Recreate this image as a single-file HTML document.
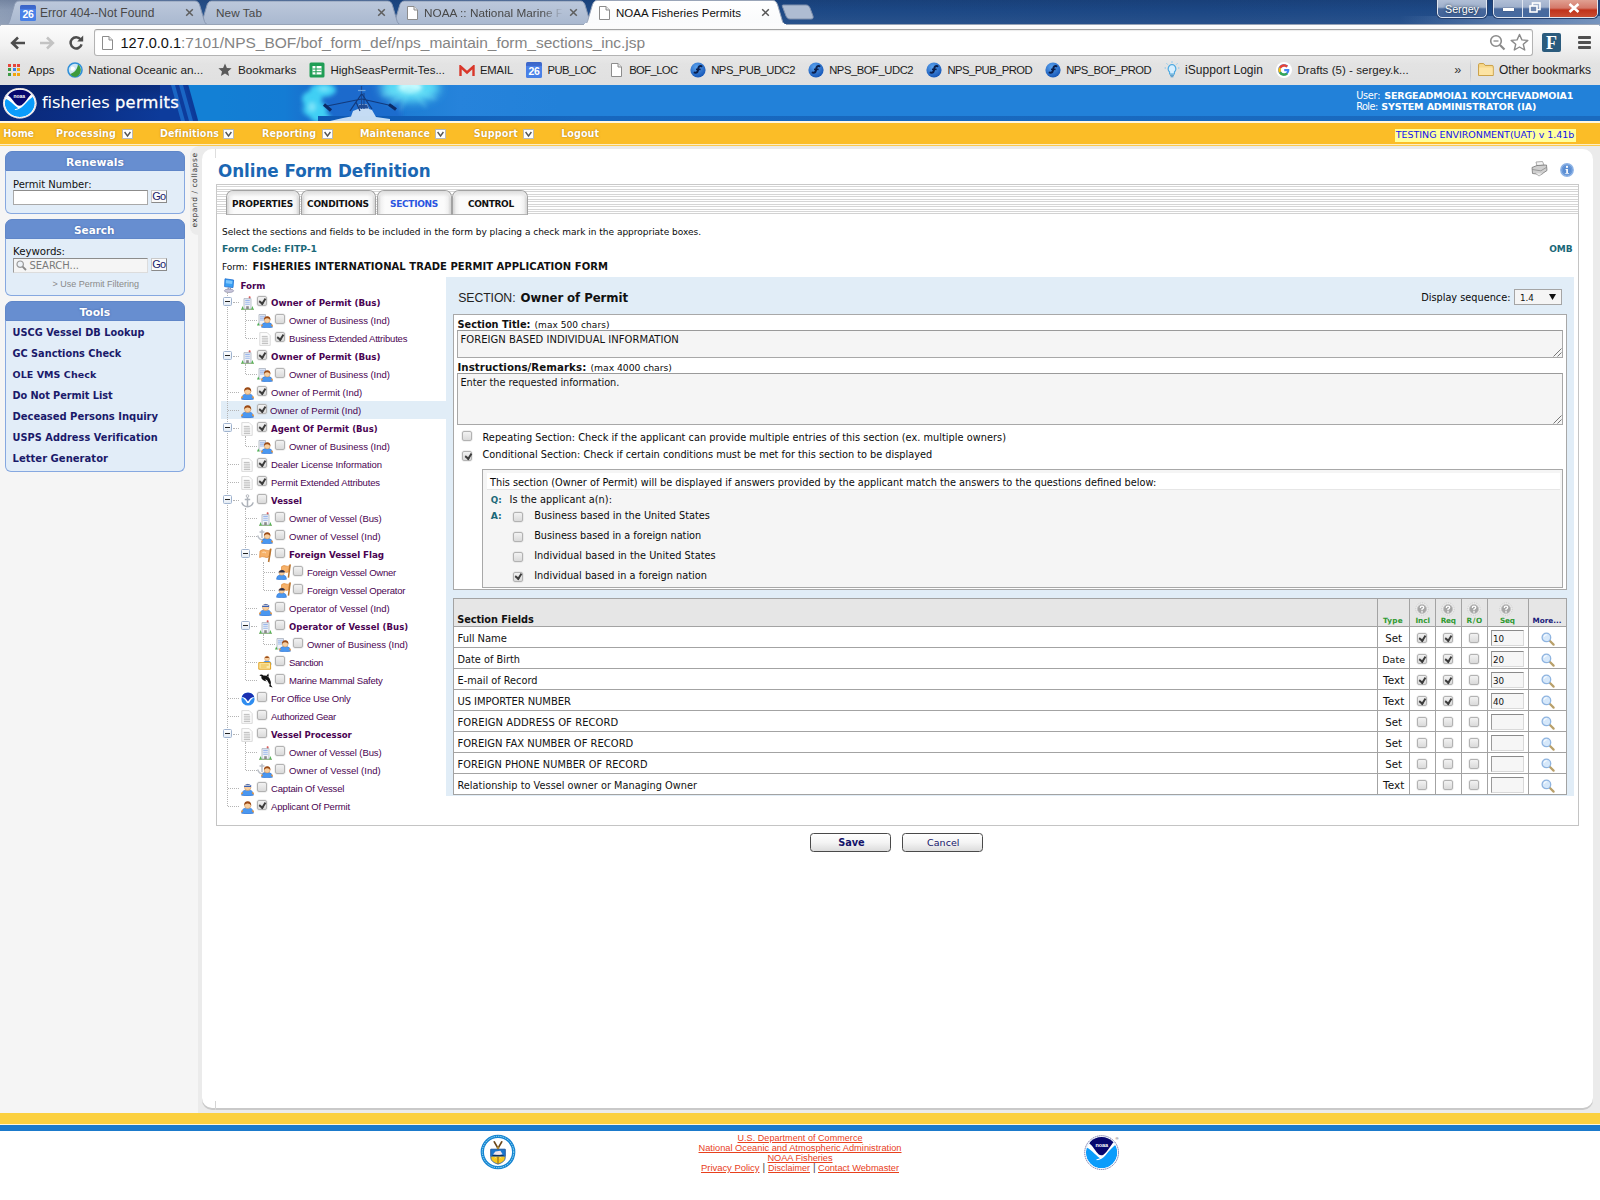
<!DOCTYPE html>
<html lang="en"><head><meta charset="utf-8"><title>NOAA Fisheries Permits</title>
<style>
html,body{margin:0;padding:0;}
body{width:1600px;height:1200px;position:relative;overflow:hidden;background:#fff;font-family:"DejaVu Sans",sans-serif;}
#pg div,#pg span.t,#pg svg,#pg i{position:absolute;box-sizing:border-box;}
#pg .t{white-space:nowrap;height:20px;}
#pg .t span{position:static;}
#pg b{font-weight:bold;}
i.cb{width:10px;height:10px;border:1px solid #b2b2b2;border-radius:2px;background:linear-gradient(#f2f2f2,#dadada);display:block;box-shadow:0 0 0 .5px rgba(200,200,200,.5)}
i.cb.on::after{content:"";position:absolute;left:2.3px;top:-.3px;width:4.6px;height:7px;border:solid #3c3c3c;border-width:0 2px 2px 0;transform:rotate(40deg) skewX(8deg);box-sizing:border-box;}
</style></head><body><div id="pg" style="left:0;top:0;width:1600px;height:1200px;overflow:hidden">
<div style="left:0px;top:0px;width:1600px;height:26px;background:linear-gradient(90deg,#8c9cb5 0,#8898b3 16px,#6a84ab 50px,#2f578f 140px,#1d4a87 300px,#1c4784 1200px,#1f4b88 1600px);"></div>
<div style="left:0px;top:0px;width:1600px;height:26px;background:linear-gradient(180deg,rgba(10,30,70,.18) 0,rgba(0,0,0,0) 40%,rgba(255,255,255,.06) 100%);"></div>
<div style="left:1400px;top:16px;width:200px;height:10px;background:linear-gradient(90deg,rgba(140,165,205,0),rgba(140,165,205,.45) 50%,rgba(150,175,210,.7));"></div>
<svg width="1600" height="27" style="left:0;top:-1px" viewBox="0 0 1600 27"><defs><linearGradient id="tgi" x1="0" y1="0" x2="0" y2="1"><stop offset="0" stop-color="#bcc8db"/><stop offset="1" stop-color="#a9b8cf"/></linearGradient><linearGradient id="tga" x1="0" y1="0" x2="0" y2="1"><stop offset="0" stop-color="#ffffff"/><stop offset="1" stop-color="#f9fafb"/></linearGradient></defs><path d="M389.9 26 C392.9 26 393.9 24.5 394.9 22.5 L399.9 5.5 C400.9 3.5 401.9 2 404.4 2 L580.4 2 C582.9 2 583.9 3.5 584.9 5.5 L589.9 22.5 C590.9 24.5 591.9 26 594.9 26 Z" fill="url(#tgi)" stroke="#8a99b3" stroke-width="1"/><path d="M197.2 26 C200.2 26 201.2 24.5 202.2 22.5 L207.2 5.5 C208.2 3.5 209.2 2 211.7 2 L387.7 2 C390.2 2 391.2 3.5 392.2 5.5 L397.2 22.5 C398.2 24.5 399.2 26 402.2 26 Z" fill="url(#tgi)" stroke="#8a99b3" stroke-width="1"/><path d="M4.5 26 C7.5 26 8.5 24.5 9.5 22.5 L14.5 5.5 C15.5 3.5 16.5 2 19 2 L195 2 C197.5 2 198.5 3.5 199.5 5.5 L204.5 22.5 C205.5 24.5 206.5 26 209.5 26 Z" fill="url(#tgi)" stroke="#8a99b3" stroke-width="1"/><path d="M783 6 L806 6 C808 6 809 7 810 9 L813 17 C813.5 19 813 20 811 20 L790 20 C788 20 787 19 786 17 L783 9 C782 7 782 6 783 6Z" fill="#aebcd2" stroke="#7f90ad" stroke-width="1"/><path d="M582.5 26 C585.5 26 586.5 24.5 587.5 22.5 L592.5 5.5 C593.5 3.5 594.5 1.5 597 1.5 L773 1.5 C775.5 1.5 776.5 3.5 777.5 5.5 L782.5 22.5 C783.5 24.5 784.5 26 787.5 26 Z" fill="url(#tga)" stroke="#9aa5b8" stroke-width="1"/></svg>
<div style="left:0px;top:24px;width:1600px;height:61px;background:linear-gradient(180deg,#fdfdfd 0,#f3f3f3 20px,#e9e9e9 32px,#e3e3e3 40px,#e0e0e0 60px);border-radius:4px 4px 0 0;"></div>
<div style="left:585px;top:23px;width:199px;height:3px;background:#fbfbfc;"></div>
<div style="left:0px;top:24px;width:584px;height:1px;background:#97a3b6;"></div>
<div style="left:786px;top:24px;width:814px;height:1px;background:#97a3b6;"></div>
<div style="left:20px;top:5px;width:16px;height:16px;background:linear-gradient(180deg,#3b64c6 0,#3f6bd0 4px,#4a80e8 4.5px,#4880e6 100%);border-radius:1.5px;"></div><div class="t" style="left:20px;top:8.2px;width:16px;text-align:center;font:bold 10.5px/12px 'Liberation Sans',sans-serif;color:#fff;letter-spacing:-0.3px;height:12px"><span>26</span></div>
<span class="t" style="top:2.5px;font:normal 12.0px/20px 'Liberation Sans',sans-serif;color:#484848;left:40px;letter-spacing:0.023px;">Error 404--Not Found</span>
<svg width="9" height="9" style="left:184.5px;top:8.0px" viewBox="0 0 9 9"><path d="M1.2 1.2 L7.8 7.8 M7.8 1.2 L1.2 7.8" stroke="#5e5e5e" stroke-width="1.5" stroke-linecap="butt"/></svg>
<span class="t" style="top:2.5px;font:normal 11.75px/20px 'Liberation Sans',sans-serif;color:#484848;left:216px;letter-spacing:0.069px;">New Tab</span>
<svg width="9" height="9" style="left:376.5px;top:8.0px" viewBox="0 0 9 9"><path d="M1.2 1.2 L7.8 7.8 M7.8 1.2 L1.2 7.8" stroke="#5e5e5e" stroke-width="1.5" stroke-linecap="butt"/></svg>
<svg width="11" height="14" style="left:407px;top:6px" viewBox="0 0 11 14"><path d="M0.5 0.5 H7 L10.5 4 V13.5 H0.5Z" fill="#fff" stroke="#8c8c8c"/><path d="M7 0.5 V4 H10.5" fill="#e8e8e8" stroke="#8c8c8c"/></svg>
<span class="t" style="top:2.5px;font:normal 11.75px/20px 'Liberation Sans',sans-serif;color:#484848;left:424px;letter-spacing:0.022px;-webkit-mask-image:linear-gradient(90deg,#000 85%,transparent 100%);">NOAA :: National Marine F</span>
<svg width="9" height="9" style="left:568.5px;top:8.0px" viewBox="0 0 9 9"><path d="M1.2 1.2 L7.8 7.8 M7.8 1.2 L1.2 7.8" stroke="#5e5e5e" stroke-width="1.5" stroke-linecap="butt"/></svg>
<svg width="11" height="14" style="left:599px;top:6px" viewBox="0 0 11 14"><path d="M0.5 0.5 H7 L10.5 4 V13.5 H0.5Z" fill="#fff" stroke="#8c8c8c"/><path d="M7 0.5 V4 H10.5" fill="#e8e8e8" stroke="#8c8c8c"/></svg>
<span class="t" style="top:2.5px;font:normal 11.5px/20px 'Liberation Sans',sans-serif;color:#111;left:616px;letter-spacing:0.046px;">NOAA Fisheries Permits</span>
<svg width="9" height="9" style="left:760.5px;top:8.0px" viewBox="0 0 9 9"><path d="M1.2 1.2 L7.8 7.8 M7.8 1.2 L1.2 7.8" stroke="#555" stroke-width="1.5" stroke-linecap="butt"/></svg>
<div style="left:1437px;top:-2px;width:50px;height:20px;border:1px solid #dfe6f1;border-radius:0 0 5px 5px;background:linear-gradient(180deg,#b3c1d8 0,#9fb0cc 45%,#4a6a9d 55%,#3f6197 100%);box-shadow:0 0 0 1px #26406d;"></div>
<div class="t" style="top:-1px;font:normal 10.75px/20px 'Liberation Sans',sans-serif;color:#fff;left:1162px;width:600px;text-align:center;letter-spacing:-0.010px;text-shadow:0 0 3px #123;"><span>Sergey</span></div>
<div style="left:1493px;top:-2px;width:105px;height:20px;border:1px solid #dfe6f1;border-radius:0 0 5px 5px;background:linear-gradient(180deg,#b3c1d8 0,#9fb0cc 45%,#4a6a9d 55%,#456aa0 100%);box-shadow:0 0 0 1px #26406d;overflow:hidden;"><div style="left:28px;top:0;width:1px;height:20px;background:#dfe6f1"></div><div style="left:55px;top:0;width:1px;height:20px;background:#dfe6f1"></div><div style="left:56px;top:0;width:48px;height:20px;background:linear-gradient(180deg,#e2a597 0,#d4796a 45%,#c0321b 55%,#cc553a 100%)"></div></div>
<div style="left:1503px;top:8px;width:11px;height:3px;background:#fff;box-shadow:0 0 1px #223;"></div>
<svg width="12" height="11" style="left:1529px;top:2px" viewBox="0 0 12 11"><rect x="3.5" y="1" width="7.5" height="6.5" fill="none" stroke="#fff" stroke-width="1.6"/><rect x="1" y="4" width="7" height="6" fill="#7088b0" stroke="#fff" stroke-width="1.6"/></svg>
<svg width="12" height="10" style="left:1568px;top:3px" viewBox="0 0 12 10"><path d="M1.5 1 L10.5 9 M10.5 1 L1.5 9" stroke="#fff" stroke-width="2.6"/></svg>
<svg width="16" height="14" style="left:10px;top:35.5px" viewBox="0 0 16 14"><path d="M15 7 H3.5 M8 1.5 L2.2 7 L8 12.5" fill="none" stroke="#4d4d4d" stroke-width="2.6" stroke-linejoin="miter"/></svg>
<svg width="16" height="14" style="left:38.5px;top:35.5px" viewBox="0 0 16 14"><path d="M1 7 H12.5 M8 1.5 L13.8 7 L8 12.5" fill="none" stroke="#c3c3c3" stroke-width="2.6"/></svg>
<svg width="16" height="15" style="left:67.5px;top:34.5px" viewBox="0 0 16 15"><path d="M12.6 4.3 A5.6 5.6 0 1 0 13.6 9.4" fill="none" stroke="#4d4d4d" stroke-width="2.5"/><path d="M9.2 6.6 H15.2 V0.6 Z" fill="#4d4d4d"/></svg>
<div style="left:94px;top:29px;width:1439px;height:27px;background:#fff;border:1px solid #b3b3b3;border-top-color:#a2a2a2;border-radius:3px;box-shadow:inset 0 1px 1px rgba(0,0,0,.08);"></div>
<svg width="11" height="14" style="left:102px;top:35.5px" viewBox="0 0 11 14"><path d="M0.5 0.5 H7 L10.5 4 V13.5 H0.5Z" fill="#fff" stroke="#8c8c8c"/><path d="M7 0.5 V4 H10.5" fill="#e8e8e8" stroke="#8c8c8c"/></svg>
<span class="t" style="top:32.8px;font:normal 14.5px/20px 'Liberation Sans',sans-serif;color:#111;left:120.5px;">127.0.0.1</span>
<span class="t" style="top:32.8px;font:normal 15.5px/20px 'Liberation Sans',sans-serif;color:#848484;left:181px;letter-spacing:-0.020px;">:7101/NPS_BOF/bof_form_def/nps_maintain_form_sections_inc.jsp</span>
<svg width="17" height="17" style="left:1489px;top:34px" viewBox="0 0 17 17"><circle cx="7" cy="7" r="5.3" fill="none" stroke="#8a8a8a" stroke-width="1.6"/><path d="M4.5 7 H9.5" stroke="#8a8a8a" stroke-width="1.3"/><path d="M11 11 L15.5 15.5" stroke="#8a8a8a" stroke-width="2.2"/></svg>
<svg width="19" height="18" style="left:1510px;top:33px" viewBox="0 0 19 18"><path d="M9.5 1.5 L11.9 6.9 L17.8 7.4 L13.3 11.3 L14.7 17 L9.5 14 L4.3 17 L5.7 11.3 L1.2 7.4 L7.1 6.9 Z" fill="#fff" stroke="#8a8a8a" stroke-width="1.4" stroke-linejoin="round"/></svg>
<div style="left:1542px;top:33px;width:19px;height:19px;background:#2b5b7d;border-radius:2px;"></div>
<div class="t" style="top:32.5px;font:bold 18px/20px 'Liberation Sans',sans-serif;color:#fff;left:1251.5px;width:600px;text-align:center;font-family:'Liberation Serif',serif;"><span>F</span></div>
<div style="left:1578px;top:36px;width:13px;height:3px;background:#505050;border-radius:1px;"></div>
<div style="left:1578px;top:41px;width:13px;height:3px;background:#505050;border-radius:1px;"></div>
<div style="left:1578px;top:46px;width:13px;height:3px;background:#505050;border-radius:1px;"></div>
<div style="left:8.0px;top:63.5px;width:3px;height:3px;background:#e5453b;"></div>
<div style="left:12.6px;top:63.5px;width:3px;height:3px;background:#e5453b;"></div>
<div style="left:17.2px;top:63.5px;width:3px;height:3px;background:#e5453b;"></div>
<div style="left:8.0px;top:68.1px;width:3px;height:3px;background:#3f9b45;"></div>
<div style="left:12.6px;top:68.1px;width:3px;height:3px;background:#3a80e6;"></div>
<div style="left:17.2px;top:68.1px;width:3px;height:3px;background:#f2a60d;"></div>
<div style="left:8.0px;top:72.7px;width:3px;height:3px;background:#3f9b45;"></div>
<div style="left:12.6px;top:72.7px;width:3px;height:3px;background:#f2a60d;"></div>
<div style="left:17.2px;top:72.7px;width:3px;height:3px;background:#f2a60d;"></div>
<span class="t" style="top:59.8px;font:normal 11.5px/20px 'Liberation Sans',sans-serif;color:#1c1c1c;left:28.2px;letter-spacing:0.070px;">Apps</span>
<svg width="16" height="16" style="left:67px;top:62px" viewBox="0 0 16 16"><circle cx="8" cy="8" r="7" fill="#cfe6f5" stroke="#2f8fd8" stroke-width="1.6"/><path d="M3 12 C7 11 10 8 11 2.5 A7 7 0 0 1 8 15 A7 7 0 0 1 3 12Z" fill="#3c9a3c"/><path d="M4 5 C6 4 8 5 8 7 C7 9 5 9 3.5 8Z" fill="#fff"/></svg>
<span class="t" style="top:59.8px;font:normal 11.75px/20px 'Liberation Sans',sans-serif;color:#1c1c1c;left:88.2px;letter-spacing:-0.028px;">National Oceanic an...</span>
<svg width="14" height="14" style="left:218px;top:63px" viewBox="0 0 14 14"><path d="M7 0.5 L8.9 4.9 L13.6 5.3 L10 8.4 L11.1 13.1 L7 10.6 L2.9 13.1 L4 8.4 L0.4 5.3 L5.1 4.9 Z" fill="#5a5a5a"/></svg>
<span class="t" style="top:59.8px;font:normal 11.75px/20px 'Liberation Sans',sans-serif;color:#1c1c1c;left:238px;letter-spacing:-0.053px;">Bookmarks</span>
<svg width="16" height="16" style="left:309px;top:62px" viewBox="0 0 16 16"><rect x="0.5" y="0.5" width="15" height="15" rx="1.5" fill="#1f9d55"/><rect x="3.5" y="4" width="9" height="8.5" fill="#fff"/><path d="M3.5 7 H12.5 M3.5 9.8 H12.5 M7 4 V12.5" stroke="#1f9d55" stroke-width="1.1"/></svg>
<span class="t" style="top:59.8px;font:normal 11.5px/20px 'Liberation Sans',sans-serif;color:#1c1c1c;left:330.5px;letter-spacing:0.004px;">HighSeasPermit-Tes...</span>
<svg width="16" height="12" style="left:459px;top:64.5px" viewBox="0 0 16 12"><path d="M1.5 11 V1.5 L8 7.5 L14.5 1.5 V11" fill="none" stroke="#d9372a" stroke-width="2.4" stroke-linejoin="miter"/></svg>
<span class="t" style="top:59.8px;font:normal 11.25px/20px 'Liberation Sans',sans-serif;color:#1c1c1c;left:480px;letter-spacing:-0.153px;">EMAIL</span>
<div style="left:526px;top:62px;width:16px;height:16px;background:linear-gradient(180deg,#3b64c6 0,#3f6bd0 4px,#4a80e8 4.5px,#4880e6 100%);border-radius:1.5px;"></div><div class="t" style="left:526px;top:65.2px;width:16px;text-align:center;font:bold 10.5px/12px 'Liberation Sans',sans-serif;color:#fff;letter-spacing:-0.3px;height:12px"><span>26</span></div>
<span class="t" style="top:59.8px;font:normal 11.25px/20px 'Liberation Sans',sans-serif;color:#1c1c1c;left:547.5px;letter-spacing:-0.604px;">PUB_LOC</span>
<svg width="11" height="14" style="left:610.5px;top:62.5px" viewBox="0 0 11 14"><path d="M0.5 0.5 H7 L10.5 4 V13.5 H0.5Z" fill="#fff" stroke="#8c8c8c"/><path d="M7 0.5 V4 H10.5" fill="#e8e8e8" stroke="#8c8c8c"/></svg>
<span class="t" style="top:59.8px;font:normal 11.25px/20px 'Liberation Sans',sans-serif;color:#1c1c1c;left:629.2px;letter-spacing:-0.602px;">BOF_LOC</span>
<svg width="16" height="16" style="left:690px;top:62px" viewBox="0 0 16 16"><defs><radialGradient id="ng690" cx=".4" cy=".3" r=".8"><stop offset="0" stop-color="#5aa2ee"/><stop offset="1" stop-color="#0d4db0"/></radialGradient></defs><circle cx="8" cy="8" r="7.6" fill="url(#ng690)"/><path d="M11.5 4.2 C9.5 3.6 8.4 4.6 8.2 7 C8 9.6 7.2 11.2 4.6 10.6" fill="none" stroke="#0a1f4d" stroke-width="2" stroke-linecap="round"/><path d="M6 7.4 H10.6" stroke="#0a1f4d" stroke-width="1.6"/></svg>
<span class="t" style="top:59.8px;font:normal 11.25px/20px 'Liberation Sans',sans-serif;color:#1c1c1c;left:711.2px;letter-spacing:-0.468px;">NPS_PUB_UDC2</span>
<svg width="16" height="16" style="left:808px;top:62px" viewBox="0 0 16 16"><defs><radialGradient id="ng808" cx=".4" cy=".3" r=".8"><stop offset="0" stop-color="#5aa2ee"/><stop offset="1" stop-color="#0d4db0"/></radialGradient></defs><circle cx="8" cy="8" r="7.6" fill="url(#ng808)"/><path d="M11.5 4.2 C9.5 3.6 8.4 4.6 8.2 7 C8 9.6 7.2 11.2 4.6 10.6" fill="none" stroke="#0a1f4d" stroke-width="2" stroke-linecap="round"/><path d="M6 7.4 H10.6" stroke="#0a1f4d" stroke-width="1.6"/></svg>
<span class="t" style="top:59.8px;font:normal 11.25px/20px 'Liberation Sans',sans-serif;color:#1c1c1c;left:829.2px;letter-spacing:-0.451px;">NPS_BOF_UDC2</span>
<svg width="16" height="16" style="left:926px;top:62px" viewBox="0 0 16 16"><defs><radialGradient id="ng926" cx=".4" cy=".3" r=".8"><stop offset="0" stop-color="#5aa2ee"/><stop offset="1" stop-color="#0d4db0"/></radialGradient></defs><circle cx="8" cy="8" r="7.6" fill="url(#ng926)"/><path d="M11.5 4.2 C9.5 3.6 8.4 4.6 8.2 7 C8 9.6 7.2 11.2 4.6 10.6" fill="none" stroke="#0a1f4d" stroke-width="2" stroke-linecap="round"/><path d="M6 7.4 H10.6" stroke="#0a1f4d" stroke-width="1.6"/></svg>
<span class="t" style="top:59.8px;font:normal 11.25px/20px 'Liberation Sans',sans-serif;color:#1c1c1c;left:947.5px;letter-spacing:-0.565px;">NPS_PUB_PROD</span>
<svg width="16" height="16" style="left:1045px;top:62px" viewBox="0 0 16 16"><defs><radialGradient id="ng1045" cx=".4" cy=".3" r=".8"><stop offset="0" stop-color="#5aa2ee"/><stop offset="1" stop-color="#0d4db0"/></radialGradient></defs><circle cx="8" cy="8" r="7.6" fill="url(#ng1045)"/><path d="M11.5 4.2 C9.5 3.6 8.4 4.6 8.2 7 C8 9.6 7.2 11.2 4.6 10.6" fill="none" stroke="#0a1f4d" stroke-width="2" stroke-linecap="round"/><path d="M6 7.4 H10.6" stroke="#0a1f4d" stroke-width="1.6"/></svg>
<span class="t" style="top:59.8px;font:normal 11.25px/20px 'Liberation Sans',sans-serif;color:#1c1c1c;left:1066.2px;letter-spacing:-0.523px;">NPS_BOF_PROD</span>
<svg width="16" height="17" style="left:1164px;top:61px" viewBox="0 0 16 17"><path d="M8 3.5 A4.3 4.3 0 0 1 10.4 11 V13 H5.6 V11 A4.3 4.3 0 0 1 8 3.5Z" fill="#d7efff" stroke="#49a7e0" stroke-width="1.1"/><path d="M6 14.3 H10 M6.6 15.8 H9.4" stroke="#3b8fc8" stroke-width="1.1"/><path d="M8 0.3 V1.8 M2.6 2.4 L3.6 3.5 M13.4 2.4 L12.4 3.5 M0.6 7 H2 M14 7 H15.4" stroke="#7cc3ee" stroke-width="1"/></svg>
<span class="t" style="top:59.8px;font:normal 12.0px/20px 'Liberation Sans',sans-serif;color:#1c1c1c;left:1185px;letter-spacing:0.044px;">iSupport Login</span>
<svg width="16" height="16" style="left:1276px;top:62px" viewBox="0 0 16 16"><circle cx="8" cy="8" r="8" fill="#fff"/><path d="M13.2 6.9 H8.2 V9.2 H11 C10.6 10.6 9.5 11.4 8.1 11.4 A3.4 3.4 0 0 1 8.1 4.6 C9 4.6 9.7 4.9 10.3 5.4 L12 3.8 C11 2.8 9.7 2.3 8.1 2.3 A5.7 5.7 0 1 0 13.4 8 C13.4 7.6 13.3 7.2 13.2 6.9Z" fill="#4285f4"/><path d="M3 5.2 A5.7 5.7 0 0 1 12 3.8 L10.3 5.4 A3.4 3.4 0 0 0 5 6.6Z" fill="#ea4335"/><path d="M3 5.2 L5 6.6 A3.4 3.4 0 0 0 5 9.4 L3 10.9 A5.7 5.7 0 0 1 3 5.2Z" fill="#fbbc05"/><path d="M3 10.9 L5 9.4 A3.4 3.4 0 0 0 10.2 10.7 L12 12.2 A5.7 5.7 0 0 1 3 10.9Z" fill="#34a853"/></svg>
<span class="t" style="top:59.8px;font:normal 11.5px/20px 'Liberation Sans',sans-serif;color:#1c1c1c;left:1297.5px;letter-spacing:0.040px;">Drafts (5) - sergey.k...</span>
<span class="t" style="top:59.5px;font:normal 12.5px/20px 'Liberation Sans',sans-serif;color:#333;left:1454.3px;letter-spacing:0.047px;">»</span>
<div style="left:1470px;top:59px;width:1px;height:24px;background:linear-gradient(180deg,rgba(200,205,215,0),#c3c8d2 30%,#c3c8d2 70%,rgba(200,205,215,0));"></div>
<svg width="16" height="13.2" style="left:1477.5px;top:63px" viewBox="0 0 17 14"><path d="M0.6 13.3 V1.8 Q0.6 0.6 1.8 0.6 H6 L7.6 2.6 H15 Q16.2 2.6 16.2 3.8 V13.3 Z" fill="#f7d88b" stroke="#c89b3d" stroke-width="1"/><path d="M1.2 4.8 H15.6 V12.8 H1.2Z" fill="#fde4a4"/></svg>
<span class="t" style="top:59.8px;font:normal 12.0px/20px 'Liberation Sans',sans-serif;color:#1c1c1c;left:1499px;">Other bookmarks</span>
<div style="left:0px;top:85px;width:1600px;height:36px;background:#2281d9;"></div>
<div style="left:0px;top:85px;width:560px;height:36px;background:linear-gradient(90deg,#0a2878 0,#0b3088 90px,#0d3c9c 170px,#1280d4 200px,#147cd4 285px,#1b6ccc 318px,#1f7fd6 420px,#2683db 460px,#2281d9 560px);"></div>
<div style="left:0px;top:85px;width:180px;height:36px;background:linear-gradient(180deg,rgba(0,8,50,.28),rgba(0,10,60,0) 75%);"></div>
<svg width="70" height="36" style="left:160px;top:85px" viewBox="0 0 70 36"><path d="M0 0 H27 L37 36 H0Z" fill="#0d3c9c"/><path d="M11 0 H15 L25 36 H21Z M19 0 H23 L33 36 H29Z" fill="#1a66c4"/><path d="M27 0 H60 L60 36 H37Z" fill="#1380d5"/><path d="M27 0 L37 36" stroke="#0c3a98" stroke-width="2.5"/></svg>
<svg width="240" height="36" style="left:240px;top:85px" viewBox="0 0 240 36"><defs><filter id="bl2" x="-50%" y="-50%" width="200%" height="200%"><feGaussianBlur stdDeviation="2.2"/></filter><filter id="bl4" x="-50%" y="-50%" width="200%" height="200%"><feGaussianBlur stdDeviation="5"/></filter></defs><rect x="78" y="0" width="84" height="36" fill="#1a68cc" opacity=".75" filter="url(#bl2)"/><g filter="url(#bl2)" fill="#3fcff4"><ellipse cx="83" cy="5" rx="13" ry="7"/><ellipse cx="72" cy="14" rx="10" ry="8"/><ellipse cx="76" cy="25" rx="11" ry="9"/><ellipse cx="81" cy="33" rx="10" ry="5"/><ellipse cx="66" cy="24" rx="4" ry="6" opacity=".6"/></g><g filter="url(#bl2)" fill="#8ae8fb" opacity=".8"><ellipse cx="84" cy="4" rx="6" ry="2.5"/><ellipse cx="72" cy="22" rx="4" ry="5"/></g><ellipse cx="170" cy="3" rx="30" ry="14" fill="#5fe0f8" filter="url(#bl4)" opacity=".95"/><ellipse cx="170" cy="2" rx="12" ry="6" fill="#c8fbff" filter="url(#bl2)"/><path d="M170 3 L150 20 M170 3 L160 26 M170 3 L186 22 M170 3 L196 14 M170 3 L142 10" stroke="#7feaf9" stroke-width="1.4" opacity=".65" filter="url(#bl2)"/></svg>
<div style="left:318px;top:116px;width:1282px;height:5px;background:linear-gradient(90deg,#0e58b2 0,#1160b8 120px,#1767be 260px,#1a6bc0 100%);"></div>
<svg width="80" height="36" style="left:320px;top:85px" viewBox="0 0 80 36"><path d="M23 33 L31 31.5 L33 26 L38 24 L39 19 L47 19 L49 24 L52 25 L56 32 L70 34 L70 36 L10 36 Z" fill="#cfe3f6" opacity=".95"/><path d="M39 19.5 H47 L48.5 23.5 H38Z" fill="#234f96"/><path d="M41.5 1 V24 M44 8 V24" stroke="#1b4a94" stroke-width="1.2"/><path d="M38 5.5 H45.5" stroke="#6fa4dc" stroke-width="1.2"/><path d="M41.5 14 L7 21 M42 14 L73 21 M41.5 9 L30 26 L36 17 L40 26 M42 9 L52 24" stroke="#123a7c" stroke-width="1.2" fill="none"/><path d="M4 19.5 L11 25.5 M69 19.5 L76 24.5" stroke="#0c2a66" stroke-width="3.2"/></svg>
<svg width="35.6" height="32.6" style="left:1.6px;top:86.5px" viewBox="0 0 35.6 32.6"><defs><clipPath id="cph"><circle cx="0" cy="0" r="15.7"/></clipPath></defs><g transform="translate(17.8 16.3) scale(0.9545 0.8693)"><circle cx="0" cy="0" r="17.6" fill="#fff"/><circle cx="0" cy="0" r="16.9" fill="none" stroke="#c9b4b4" stroke-width="0.9" stroke-dasharray="1.3 .7"/><g clip-path="url(#cph)"><circle cx="0" cy="0" r="15.7" fill="#0b9cfb"/><path d="M-16.5 -5.4 C-11 -4.6 -7 2 -1.6 5.6 L-5.4 6.9 L-4.8 7.6 C-1.5 7.2 1.5 5.6 4 2.6 C8 -2 11 -6.4 16.5 -9.4 L16.5 -20 L-16.5 -20Z" fill="#fff"/><path d="M-12.4 -9.4 L-8 -16 L8 -16 L12.2 -10.6 C9 -7.4 6 -0.6 1.8 2.2 C0.6 3 -1.6 3 -2.8 2 C-6 -1 -8.4 -6.4 -12.4 -9.4Z" fill="#07076e"/></g></g></svg>
<div class="t" style="top:86.3px;font:bold 5px/20px 'Liberation Sans',sans-serif;color:#fff;left:-280.8px;width:600px;text-align:center;letter-spacing:-0.100px;"><span>noaa</span></div>
<span class="t" style="top:92.7px;font:normal 16.25px/20px 'DejaVu Sans',sans-serif;color:#fff;left:42px;letter-spacing:-0.130px;">fisheries</span>
<span class="t" style="top:92.7px;font:normal 16.25px/20px 'DejaVu Sans',sans-serif;color:#fff;left:115px;letter-spacing:0.301px;-webkit-text-stroke:.3px #fff;">permits</span>
<span class="t" style="top:86px;font:normal 9.75px/20px 'DejaVu Sans',sans-serif;color:#fff;left:1356.2px;letter-spacing:-0.269px;">User:</span>
<span class="t" style="top:86px;font:bold 9.5px/20px 'DejaVu Sans',sans-serif;color:#fff;left:1384.2px;letter-spacing:-0.143px;">SERGEADMOIA1 KOLYCHEVADMOIA1</span>
<span class="t" style="top:97.2px;font:normal 9.75px/20px 'DejaVu Sans',sans-serif;color:#fff;left:1356.2px;letter-spacing:-0.559px;">Role:</span>
<span class="t" style="top:97.2px;font:bold 9.5px/20px 'DejaVu Sans',sans-serif;color:#fff;left:1381.2px;letter-spacing:-0.121px;">SYSTEM ADMINISTRATOR (IA)</span>
<div style="left:0px;top:121px;width:1600px;height:2px;background:#fff7e2;"></div>
<div style="left:0px;top:122.5px;width:1600px;height:22px;background:#fbbd27;"></div>
<div style="left:0px;top:144px;width:1600px;height:1px;background:#fdeec5;"></div>
<div style="left:0px;top:145px;width:1600px;height:1px;background:#fbc94e;"></div>
<span class="t" style="top:124px;font:bold 9.6px/20px 'DejaVu Sans',sans-serif;color:#fff;left:3.3px;letter-spacing:-0.106px;text-shadow:0 0 2px rgba(170,110,0,.55),0 0 1px rgba(150,100,0,.5);">Home</span>
<span class="t" style="top:124px;font:bold 9.6px/20px 'DejaVu Sans',sans-serif;color:#fff;left:56px;letter-spacing:0.103px;text-shadow:0 0 2px rgba(170,110,0,.55),0 0 1px rgba(150,100,0,.5);">Processing</span>
<svg width="11" height="10" style="left:121.5px;top:128.5px" viewBox="0 0 11 10"><rect x=".5" y=".5" width="10" height="9" fill="#fff" stroke="#b9b9b9"/><path d="M2.6 3 L5.5 7 L8.4 3" fill="none" stroke="#555" stroke-width="1.4"/></svg>
<span class="t" style="top:124px;font:bold 9.6px/20px 'DejaVu Sans',sans-serif;color:#fff;left:160px;letter-spacing:-0.011px;text-shadow:0 0 2px rgba(170,110,0,.55),0 0 1px rgba(150,100,0,.5);">Definitions</span>
<svg width="11" height="10" style="left:223.3px;top:128.5px" viewBox="0 0 11 10"><rect x=".5" y=".5" width="10" height="9" fill="#fff" stroke="#b9b9b9"/><path d="M2.6 3 L5.5 7 L8.4 3" fill="none" stroke="#555" stroke-width="1.4"/></svg>
<span class="t" style="top:124px;font:bold 9.6px/20px 'DejaVu Sans',sans-serif;color:#fff;left:262px;letter-spacing:0.072px;text-shadow:0 0 2px rgba(170,110,0,.55),0 0 1px rgba(150,100,0,.5);">Reporting</span>
<svg width="11" height="10" style="left:321.8px;top:128.5px" viewBox="0 0 11 10"><rect x=".5" y=".5" width="10" height="9" fill="#fff" stroke="#b9b9b9"/><path d="M2.6 3 L5.5 7 L8.4 3" fill="none" stroke="#555" stroke-width="1.4"/></svg>
<span class="t" style="top:124px;font:bold 9.6px/20px 'DejaVu Sans',sans-serif;color:#fff;left:360px;letter-spacing:0.040px;text-shadow:0 0 2px rgba(170,110,0,.55),0 0 1px rgba(150,100,0,.5);">Maintenance</span>
<svg width="11" height="10" style="left:435px;top:128.5px" viewBox="0 0 11 10"><rect x=".5" y=".5" width="10" height="9" fill="#fff" stroke="#b9b9b9"/><path d="M2.6 3 L5.5 7 L8.4 3" fill="none" stroke="#555" stroke-width="1.4"/></svg>
<span class="t" style="top:124px;font:bold 9.6px/20px 'DejaVu Sans',sans-serif;color:#fff;left:473.8px;letter-spacing:0.116px;text-shadow:0 0 2px rgba(170,110,0,.55),0 0 1px rgba(150,100,0,.5);">Support</span>
<svg width="11" height="10" style="left:522.5px;top:128.5px" viewBox="0 0 11 10"><rect x=".5" y=".5" width="10" height="9" fill="#fff" stroke="#b9b9b9"/><path d="M2.6 3 L5.5 7 L8.4 3" fill="none" stroke="#555" stroke-width="1.4"/></svg>
<span class="t" style="top:124px;font:bold 9.6px/20px 'DejaVu Sans',sans-serif;color:#fff;left:561.2px;letter-spacing:0.068px;text-shadow:0 0 2px rgba(170,110,0,.55),0 0 1px rgba(150,100,0,.5);">Logout</span>
<div style="left:1394.5px;top:128.5px;width:181.5px;height:13.3px;background:#ffff9c;"></div>
<span class="t" style="top:124.5px;font:normal 9.5px/20px 'DejaVu Sans',sans-serif;color:#1212ee;left:1395.8px;letter-spacing:-0.028px;">TESTING ENVIRONMENT(UAT) v 1.41b</span>
<div style="left:0px;top:146px;width:1600px;height:967px;background:#f5f5f5;"></div>
<div style="left:5px;top:151px;width:180px;height:20px;background:#678ed0;border:1px solid #5f86c8;border-radius:7px 7px 0 0;"></div>
<div style="left:5px;top:171px;width:180px;height:43px;background:#e2edf8;border:1px solid #86a8e0;border-top:none;border-radius:0 0 6px 6px;"></div>
<span class="t" style="top:152.7px;font:bold 10.75px/20px 'DejaVu Sans',sans-serif;color:#fff;left:66px;letter-spacing:0.027px;text-shadow:0 0 2px rgba(30,60,130,.6);">Renewals</span>
<span class="t" style="top:174.5px;font:normal 10.0px/20px 'DejaVu Sans',sans-serif;color:#111;left:13px;letter-spacing:-0.018px;">Permit Number:</span>
<div style="left:13px;top:189.5px;width:135px;height:15px;background:#fff;border:1px solid #a9a9a9;border-top-color:#8c8c8c;"></div>
<div style="left:151px;top:189.5px;width:15.5px;height:13.5px;background:#fafafa;border:1px solid #c9c9c9;border-right-color:#8a8a8a;border-bottom-color:#8a8a8a;"></div>
<span class="t" style="top:185.8px;font:normal 11px/20px 'Liberation Sans',sans-serif;color:#1a1a6a;left:152.3px;letter-spacing:-0.844px;">Go</span>
<div style="left:5px;top:219px;width:180px;height:20px;background:#678ed0;border:1px solid #5f86c8;border-radius:7px 7px 0 0;"></div>
<div style="left:5px;top:239px;width:180px;height:56.5px;background:#e2edf8;border:1px solid #86a8e0;border-top:none;border-radius:0 0 6px 6px;"></div>
<span class="t" style="top:219.7px;font:bold 10.5px/20px 'DejaVu Sans',sans-serif;color:#fff;left:74px;letter-spacing:-0.026px;text-shadow:0 0 2px rgba(30,60,130,.6);">Search</span>
<span class="t" style="top:241px;font:normal 10.25px/20px 'DejaVu Sans',sans-serif;color:#111;left:13px;letter-spacing:-0.064px;">Keywords:</span>
<div style="left:13px;top:257.5px;width:135px;height:15px;background:#f5f5f5;border:1px solid #dcdcdc;border-top-color:#8c8c8c;border-left-color:#9c9c9c;"></div>
<svg width="11" height="11" style="left:15.5px;top:259.5px" viewBox="0 0 11 11"><circle cx="4.2" cy="4.2" r="3.2" fill="#eef3f8" stroke="#9a9a9a" stroke-width="1.2"/><path d="M6.6 6.6 L10 10" stroke="#8a8a8a" stroke-width="1.8"/></svg>
<span class="t" style="top:255.8px;font:normal 10.0px/20px 'DejaVu Sans',sans-serif;color:#7a7a7a;left:29.5px;letter-spacing:-0.036px;">SEARCH...</span>
<div style="left:151px;top:257.5px;width:15.5px;height:13.5px;background:#fafafa;border:1px solid #c9c9c9;border-right-color:#8a8a8a;border-bottom-color:#8a8a8a;"></div>
<span class="t" style="top:253.8px;font:normal 11px/20px 'Liberation Sans',sans-serif;color:#1a1a6a;left:152.3px;letter-spacing:-0.844px;">Go</span>
<span class="t" style="top:273.5px;font:normal 9.0px/20px 'Liberation Sans',sans-serif;color:#8a8a8a;left:52.5px;letter-spacing:-0.013px;">&gt; Use Permit Filtering</span>
<div style="left:5px;top:301px;width:180px;height:20px;background:#678ed0;border:1px solid #5f86c8;border-radius:7px 7px 0 0;"></div>
<div style="left:5px;top:321px;width:180px;height:150.5px;background:#e2edf8;border:1px solid #86a8e0;border-top:none;border-radius:0 0 6px 6px;"></div>
<span class="t" style="top:302.7px;font:bold 10.75px/20px 'DejaVu Sans',sans-serif;color:#fff;left:79.5px;letter-spacing:-0.053px;text-shadow:0 0 2px rgba(30,60,130,.6);">Tools</span>
<span class="t" style="top:323.2px;font:bold 9.75px/20px 'DejaVu Sans',sans-serif;color:#1a1a6a;left:12.5px;letter-spacing:0.047px;">USCG Vessel DB Lookup</span>
<span class="t" style="top:344.2px;font:bold 9.75px/20px 'DejaVu Sans',sans-serif;color:#1a1a6a;left:12.5px;letter-spacing:0.005px;">GC Sanctions Check</span>
<span class="t" style="top:365.2px;font:bold 9.5px/20px 'DejaVu Sans',sans-serif;color:#1a1a6a;left:12.5px;letter-spacing:0.060px;">OLE VMS Check</span>
<span class="t" style="top:386.2px;font:bold 9.75px/20px 'DejaVu Sans',sans-serif;color:#1a1a6a;left:12.5px;letter-spacing:-0.069px;">Do Not Permit List</span>
<span class="t" style="top:407.2px;font:bold 10.0px/20px 'DejaVu Sans',sans-serif;color:#1a1a6a;left:12.5px;letter-spacing:-0.035px;">Deceased Persons Inquiry</span>
<span class="t" style="top:428.2px;font:bold 9.75px/20px 'DejaVu Sans',sans-serif;color:#1a1a6a;left:12.5px;letter-spacing:0.062px;">USPS Address Verification</span>
<span class="t" style="top:449.2px;font:bold 10.0px/20px 'DejaVu Sans',sans-serif;color:#1a1a6a;left:12.5px;letter-spacing:0.026px;">Letter Generator</span>
<div style="left:189.5px;top:146px;width:12px;height:89px;background:#ebebeb;border-radius:9px 0 0 8px;"></div>
<div style="left:198px;top:146px;width:4px;height:967px;background:#ebebeb;"></div>
<span class="t" style="top:-12px;font:normal 7.5px/20px 'DejaVu Sans',sans-serif;color:#333;left:0px;letter-spacing:0.550px;left:144.5px;top:179.5px;width:100px;transform:rotate(-90deg);transform-origin:center;text-align:center;">expand / collapse</span>
<div style="left:1592px;top:146px;width:8px;height:967px;background:#ebebeb;"></div>
<div style="left:198px;top:1100px;width:1402px;height:13px;background:#ebebeb;"></div>
<div style="left:198px;top:146px;width:1402px;height:14px;background:#ebebeb;"></div>
<div style="left:202px;top:149px;width:1391px;height:959px;background:#fff;border-radius:10px;box-shadow:0 2px 0 0 #c9c9c9;"></div>
<div style="left:215px;top:149px;width:1px;height:9px;background:#dedede;"></div>
<div style="left:215px;top:1101px;width:1px;height:9px;background:#d4d4d4;"></div>
<svg width="17" height="16" style="left:1531px;top:161px" viewBox="0 0 17 16"><path d="M5 1 L11.5 0.5 L13 4 L6 5Z" fill="#f4f4f4" stroke="#9a9a9a" stroke-width=".8"/><path d="M1 6.5 L6 4.5 L15.5 4 L16 9.5 L10 13.5 L1.5 12.5Z" fill="#cfcfcf" stroke="#777" stroke-width=".8"/><path d="M1.2 8.5 L9.8 9.8 L15.8 6.2" fill="none" stroke="#8a8a8a" stroke-width=".8"/><path d="M4 12 L8 15 L12 12.5" fill="#eee" stroke="#999" stroke-width=".7"/></svg>
<svg width="14" height="14" style="left:1560px;top:163px" viewBox="0 0 15 15"><circle cx="7.5" cy="7.5" r="6.6" fill="#5a8dd2" stroke="#8db3e6" stroke-width="1.6"/><circle cx="7.5" cy="7.5" r="4.9" fill="none" stroke="#7aa5de" stroke-width=".7"/><circle cx="7.5" cy="4.2" r="1.2" fill="#fff"/><path d="M6 6.4 H8.5 V10.6 H9.6 V11.6 H5.6 V10.6 H6.7 V7.4 H6Z" fill="#fff"/></svg>
<span class="t" style="top:161px;font:bold 16.75px/20px 'DejaVu Sans',sans-serif;color:#1b67b3;left:218px;letter-spacing:-0.050px;">Online Form Definition</span>
<div style="left:216px;top:184px;width:1363px;height:30px;border:1px solid #c9c9c9;border-bottom:1px solid #d2d2d2;background:repeating-linear-gradient(180deg,#ffffff 0,#ffffff 1.4px,#d6d6d6 1.4px,#d6d6d6 2.5px);"></div>
<div style="left:226px;top:190px;width:74px;height:24.5px;background:linear-gradient(90deg,#cfcfcf 0,#f1f1f1 3px,#fbfbfb 7px,#fbfbfb calc(100% - 7px),#f1f1f1 calc(100% - 3px),#cfcfcf 100%);border:1px solid #a2a2a2;border-bottom:1px solid #b5b5b5;border-radius:7px 7px 0 0;box-shadow:inset 0 2px 1px #fff;"></div>
<div style="left:227px;top:191px;width:72px;height:6px;background:linear-gradient(180deg,rgba(215,215,215,.9),rgba(240,240,240,0));border-radius:6px 6px 0 0;"></div>
<span class="t" style="top:194px;font:bold 9.0px/20px 'DejaVu Sans',sans-serif;color:#111;left:232px;letter-spacing:-0.158px;">PROPERTIES</span>
<div style="left:300.5px;top:190px;width:75.5px;height:24.5px;background:linear-gradient(90deg,#cfcfcf 0,#f1f1f1 3px,#fbfbfb 7px,#fbfbfb calc(100% - 7px),#f1f1f1 calc(100% - 3px),#cfcfcf 100%);border:1px solid #a2a2a2;border-bottom:1px solid #b5b5b5;border-radius:7px 7px 0 0;box-shadow:inset 0 2px 1px #fff;"></div>
<div style="left:301.5px;top:191px;width:73.5px;height:6px;background:linear-gradient(180deg,rgba(215,215,215,.9),rgba(240,240,240,0));border-radius:6px 6px 0 0;"></div>
<span class="t" style="top:194px;font:bold 9.0px/20px 'DejaVu Sans',sans-serif;color:#111;left:307px;letter-spacing:-0.197px;">CONDITIONS</span>
<div style="left:452px;top:190px;width:75.5px;height:24.5px;background:linear-gradient(90deg,#cfcfcf 0,#f1f1f1 3px,#fbfbfb 7px,#fbfbfb calc(100% - 7px),#f1f1f1 calc(100% - 3px),#cfcfcf 100%);border:1px solid #a2a2a2;border-bottom:1px solid #b5b5b5;border-radius:7px 7px 0 0;box-shadow:inset 0 2px 1px #fff;"></div>
<div style="left:453px;top:191px;width:73.5px;height:6px;background:linear-gradient(180deg,rgba(215,215,215,.9),rgba(240,240,240,0));border-radius:6px 6px 0 0;"></div>
<span class="t" style="top:194px;font:bold 9.0px/20px 'DejaVu Sans',sans-serif;color:#111;left:468px;letter-spacing:-0.350px;">CONTROL</span>
<div style="left:377px;top:190px;width:74.5px;height:24.5px;background:linear-gradient(90deg,#cfcfcf 0,#f1f1f1 3px,#fbfbfb 7px,#fbfbfb calc(100% - 7px),#f1f1f1 calc(100% - 3px),#cfcfcf 100%);border:1px solid #a2a2a2;border-bottom:1px solid #b5b5b5;border-radius:7px 7px 0 0;box-shadow:inset 0 2px 1px #fff;"></div>
<div style="left:378px;top:191px;width:72.5px;height:6px;background:linear-gradient(180deg,rgba(215,215,215,.9),rgba(240,240,240,0));border-radius:6px 6px 0 0;"></div>
<span class="t" style="top:194px;font:bold 9.0px/20px 'DejaVu Sans',sans-serif;color:#2a55e0;left:390px;letter-spacing:-0.299px;">SECTIONS</span>
<div style="left:216px;top:213px;width:1363px;height:613px;border:1px solid #c4c4c4;border-top:none;"></div>
<span class="t" style="top:222px;font:normal 9.0px/20px 'DejaVu Sans',sans-serif;color:#0a0a0a;left:222px;letter-spacing:-0.017px;">Select the sections and fields to be included in the form by placing a check mark in the appropriate boxes.</span>
<span class="t" style="top:239px;font:bold 9.25px/20px 'DejaVu Sans',sans-serif;color:#1b6878;left:222px;letter-spacing:-0.038px;">Form Code: FITP-1</span>
<span class="t" style="top:239px;font:bold 9.0px/20px 'DejaVu Sans',sans-serif;color:#1b6878;left:1549.2px;letter-spacing:-0.056px;">OMB</span>
<span class="t" style="top:257px;font:normal 9.0px/20px 'DejaVu Sans',sans-serif;color:#0a0a0a;left:222px;letter-spacing:-0.044px;">Form:</span>
<span class="t" style="top:257px;font:bold 10.0px/20px 'DejaVu Sans',sans-serif;color:#111;left:252.5px;letter-spacing:0.046px;">FISHERIES INTERNATIONAL TRADE PERMIT APPLICATION FORM</span>
<div style="left:221px;top:401px;width:226px;height:18px;background:#e1edf7;"></div>
<div style="left:446px;top:277px;width:1128px;height:519px;background:#e1edf7;"></div>
<svg width="13" height="15" style="left:222.5px;top:277.5px" viewBox="0 0 13 15"><path d="M2 0.8 L10.6 2 L10 9.6 L1.6 8.6Z" fill="#3aa0f4" stroke="#1d6fd0" stroke-width=".8"/><path d="M3 2 L9.4 2.9 L9.1 6 L2.8 5.2Z" fill="#8fd0ff" opacity=".8"/><path d="M5.4 9.4 L5 11.6 M7.4 9.6 L7.2 11.8" stroke="#8d8ea8" stroke-width="1.2"/><ellipse cx="6" cy="12.8" rx="4.6" ry="1.7" fill="#c9c7dc" stroke="#8d8ea8" stroke-width=".7"/></svg>
<span class="t" style="top:276px;font:bold 8.75px/20px 'DejaVu Sans',sans-serif;color:#4a0352;left:240.4px;letter-spacing:-0.020px;">Form</span>
<div style="left:227px;top:292px;width:0;height:514px;border-left:1px dotted #b4b4b4"></div>
<div style="left:232.5px;top:302px;width:6.5px;height:0;border-top:1px dotted #b4b4b4"></div>
<div style="left:223.0px;top:296.7px;width:9px;height:9px;border:1px solid #9fb3cf;border-radius:1.5px;background:linear-gradient(#fff,#e4ecf5)"></div><div style="left:225.0px;top:300.7px;width:5px;height:1px;background:#222"></div>
<div style="left:245.0px;top:310px;width:0;height:28px;border-left:1px dotted #b4b4b4"></div>
<svg width="13" height="14" style="left:241px;top:295.5px" viewBox="0 0 13 14"><path d="M3 2.6 H10 V13 H3Z" fill="#f1f3f7" stroke="#aab1be" stroke-width=".8"/><path d="M4.2 4.4 H8.8 M4.2 6.3 H8.8 M4.2 8.2 H8.8" stroke="#9cb8ec" stroke-width="1.1"/><path d="M5.2 10.2 H7.8 V13 H5.2Z" fill="#8a8a8a"/><path d="M0.2 13.5 L1.6 10 L3 13.5Z M10 13.5 L11.4 10 L12.8 13.5Z" fill="#58b558"/><path d="M0 13.6 H13" stroke="#7aa86a" stroke-width=".8"/><circle cx="8.6" cy="1.3" r="1" fill="#e04a4a"/><path d="M8.6 1.6 V2.6" stroke="#999" stroke-width=".8"/></svg>
<i class="cb on" style="left:257.2px;top:296px"></i>
<span class="t" style="top:292.8px;font:bold 8.75px/20px 'DejaVu Sans',sans-serif;color:#4a0352;left:271px;letter-spacing:-0.030px;">Owner of Permit (Bus)</span>
<div style="left:245.5px;top:320px;width:11.5px;height:0;border-top:1px dotted #b4b4b4"></div>
<svg width="9" height="13" style="left:257.0px;top:312.5px" viewBox="0 0 9 13"><path d="M2 1.5 H8.5 V12 H2Z" fill="#f1f3f7" stroke="#aab1be" stroke-width=".8"/><path d="M3 3.2 H8 M3 5.1 H8 M3 7 H8" stroke="#9cb8ec" stroke-width="1.1"/><path d="M0 12.5 L1.3 9.5 L2.6 12.5Z" fill="#4caf50"/></svg><svg width="12" height="13" style="left:261.0px;top:314.5px" viewBox="0 0 13 14"><path d="M0.6 13.2 Q0.8 8.6 4.4 8.2 H8.8 Q12.2 8.6 12.4 13.2 Q6.5 14.6 0.6 13.2Z" fill="#4a97f0" stroke="#2b6fd0" stroke-width=".6"/><path d="M0.4 12.2 L1.6 10.4 M12.6 12.2 L11.4 10.4" stroke="#f29a3a" stroke-width="1.4"/><ellipse cx="6.7" cy="5.4" rx="3.2" ry="3.1" fill="#f8cfa0" stroke="#c98a4e" stroke-width=".5"/><path d="M3.2 5.4 Q3 1.2 6.8 1.2 Q10.4 1.4 10.2 5.4 Q8.6 3.2 6.2 3.6 Q4.4 3.6 3.2 5.4Z" fill="#9a4a16"/></svg>
<i class="cb" style="left:275.2px;top:314px"></i>
<span class="t" style="top:310.8px;font:normal 9.5px/20px 'Liberation Sans',sans-serif;color:#4a0352;left:289px;letter-spacing:-0.050px;">Owner of Business (Ind)</span>
<div style="left:245.5px;top:338px;width:11.5px;height:0;border-top:1px dotted #b4b4b4"></div>
<svg width="12" height="14" style="left:259px;top:331.5px" viewBox="0 0 12 14"><path d="M0.8 0.6 H8.2 L11.2 3.6 V13.4 H0.8Z" fill="#fdfdfd" stroke="#d0d0d0" stroke-width=".8"/><path d="M2.8 4.4 H8.6 M2.8 6.2 H9.2 M2.8 8 H9.2 M2.8 9.8 H9.2 M2.8 11.6 H9.2" stroke="#b4b4b4" stroke-width=".9"/></svg>
<i class="cb on" style="left:275.2px;top:332px"></i>
<span class="t" style="top:328.8px;font:normal 9.5px/20px 'Liberation Sans',sans-serif;color:#4a0352;left:289px;letter-spacing:-0.190px;">Business Extended Attributes</span>
<div style="left:232.5px;top:356px;width:6.5px;height:0;border-top:1px dotted #b4b4b4"></div>
<div style="left:223.0px;top:350.7px;width:9px;height:9px;border:1px solid #9fb3cf;border-radius:1.5px;background:linear-gradient(#fff,#e4ecf5)"></div><div style="left:225.0px;top:354.7px;width:5px;height:1px;background:#222"></div>
<div style="left:245.0px;top:364px;width:0;height:10px;border-left:1px dotted #b4b4b4"></div>
<svg width="13" height="14" style="left:241px;top:349.5px" viewBox="0 0 13 14"><path d="M3 2.6 H10 V13 H3Z" fill="#f1f3f7" stroke="#aab1be" stroke-width=".8"/><path d="M4.2 4.4 H8.8 M4.2 6.3 H8.8 M4.2 8.2 H8.8" stroke="#9cb8ec" stroke-width="1.1"/><path d="M5.2 10.2 H7.8 V13 H5.2Z" fill="#8a8a8a"/><path d="M0.2 13.5 L1.6 10 L3 13.5Z M10 13.5 L11.4 10 L12.8 13.5Z" fill="#58b558"/><path d="M0 13.6 H13" stroke="#7aa86a" stroke-width=".8"/><circle cx="8.6" cy="1.3" r="1" fill="#e04a4a"/><path d="M8.6 1.6 V2.6" stroke="#999" stroke-width=".8"/></svg>
<i class="cb on" style="left:257.2px;top:350px"></i>
<span class="t" style="top:346.8px;font:bold 8.75px/20px 'DejaVu Sans',sans-serif;color:#4a0352;left:271px;letter-spacing:-0.030px;">Owner of Permit (Bus)</span>
<div style="left:245.5px;top:374px;width:11.5px;height:0;border-top:1px dotted #b4b4b4"></div>
<svg width="9" height="13" style="left:257.0px;top:366.5px" viewBox="0 0 9 13"><path d="M2 1.5 H8.5 V12 H2Z" fill="#f1f3f7" stroke="#aab1be" stroke-width=".8"/><path d="M3 3.2 H8 M3 5.1 H8 M3 7 H8" stroke="#9cb8ec" stroke-width="1.1"/><path d="M0 12.5 L1.3 9.5 L2.6 12.5Z" fill="#4caf50"/></svg><svg width="12" height="13" style="left:261.0px;top:368.5px" viewBox="0 0 13 14"><path d="M0.6 13.2 Q0.8 8.6 4.4 8.2 H8.8 Q12.2 8.6 12.4 13.2 Q6.5 14.6 0.6 13.2Z" fill="#4a97f0" stroke="#2b6fd0" stroke-width=".6"/><path d="M0.4 12.2 L1.6 10.4 M12.6 12.2 L11.4 10.4" stroke="#f29a3a" stroke-width="1.4"/><ellipse cx="6.7" cy="5.4" rx="3.2" ry="3.1" fill="#f8cfa0" stroke="#c98a4e" stroke-width=".5"/><path d="M3.2 5.4 Q3 1.2 6.8 1.2 Q10.4 1.4 10.2 5.4 Q8.6 3.2 6.2 3.6 Q4.4 3.6 3.2 5.4Z" fill="#9a4a16"/></svg>
<i class="cb" style="left:275.2px;top:368px"></i>
<span class="t" style="top:364.8px;font:normal 9.5px/20px 'Liberation Sans',sans-serif;color:#4a0352;left:289px;letter-spacing:-0.050px;">Owner of Business (Ind)</span>
<div style="left:227.5px;top:392px;width:11.5px;height:0;border-top:1px dotted #b4b4b4"></div>
<svg width="13" height="14" style="left:241px;top:385.5px" viewBox="0 0 13 14"><path d="M0.6 13.2 Q0.8 8.6 4.4 8.2 H8.8 Q12.2 8.6 12.4 13.2 Q6.5 14.6 0.6 13.2Z" fill="#4a97f0" stroke="#2b6fd0" stroke-width=".6"/><path d="M0.4 12.2 L1.6 10.4 M12.6 12.2 L11.4 10.4" stroke="#f29a3a" stroke-width="1.4"/><ellipse cx="6.7" cy="5.4" rx="3.2" ry="3.1" fill="#f8cfa0" stroke="#c98a4e" stroke-width=".5"/><path d="M3.2 5.4 Q3 1.2 6.8 1.2 Q10.4 1.4 10.2 5.4 Q8.6 3.2 6.2 3.6 Q4.4 3.6 3.2 5.4Z" fill="#9a4a16"/></svg>
<i class="cb on" style="left:257.2px;top:386px"></i>
<span class="t" style="top:382.8px;font:normal 9.5px/20px 'Liberation Sans',sans-serif;color:#4a0352;left:271px;letter-spacing:0.021px;">Owner of Permit (Ind)</span>
<div style="left:227.5px;top:410px;width:11.5px;height:0;border-top:1px dotted #b4b4b4"></div>
<svg width="13" height="14" style="left:241px;top:403.5px" viewBox="0 0 13 14"><path d="M0.6 13.2 Q0.8 8.6 4.4 8.2 H8.8 Q12.2 8.6 12.4 13.2 Q6.5 14.6 0.6 13.2Z" fill="#4a97f0" stroke="#2b6fd0" stroke-width=".6"/><path d="M0.4 12.2 L1.6 10.4 M12.6 12.2 L11.4 10.4" stroke="#f29a3a" stroke-width="1.4"/><ellipse cx="6.7" cy="5.4" rx="3.2" ry="3.1" fill="#f8cfa0" stroke="#c98a4e" stroke-width=".5"/><path d="M3.2 5.4 Q3 1.2 6.8 1.2 Q10.4 1.4 10.2 5.4 Q8.6 3.2 6.2 3.6 Q4.4 3.6 3.2 5.4Z" fill="#9a4a16"/></svg>
<i class="cb on" style="left:257.2px;top:404px"></i>
<span class="t" style="top:400.8px;font:normal 9.5px/20px 'Liberation Sans',sans-serif;color:#4a0352;left:270px;letter-spacing:0.021px;">Owner of Permit (Ind)</span>
<div style="left:232.5px;top:428px;width:6.5px;height:0;border-top:1px dotted #b4b4b4"></div>
<div style="left:223.0px;top:422.7px;width:9px;height:9px;border:1px solid #9fb3cf;border-radius:1.5px;background:linear-gradient(#fff,#e4ecf5)"></div><div style="left:225.0px;top:426.7px;width:5px;height:1px;background:#222"></div>
<div style="left:245.0px;top:436px;width:0;height:10px;border-left:1px dotted #b4b4b4"></div>
<svg width="12" height="14" style="left:241px;top:421.5px" viewBox="0 0 12 14"><path d="M0.8 0.6 H8.2 L11.2 3.6 V13.4 H0.8Z" fill="#fdfdfd" stroke="#d0d0d0" stroke-width=".8"/><path d="M2.8 4.4 H8.6 M2.8 6.2 H9.2 M2.8 8 H9.2 M2.8 9.8 H9.2 M2.8 11.6 H9.2" stroke="#b4b4b4" stroke-width=".9"/></svg>
<i class="cb on" style="left:257.2px;top:422px"></i>
<span class="t" style="top:418.8px;font:bold 8.5px/20px 'DejaVu Sans',sans-serif;color:#4a0352;left:271px;letter-spacing:0.048px;">Agent Of Permit (Bus)</span>
<div style="left:245.5px;top:446px;width:11.5px;height:0;border-top:1px dotted #b4b4b4"></div>
<svg width="9" height="13" style="left:257.0px;top:438.5px" viewBox="0 0 9 13"><path d="M2 1.5 H8.5 V12 H2Z" fill="#f1f3f7" stroke="#aab1be" stroke-width=".8"/><path d="M3 3.2 H8 M3 5.1 H8 M3 7 H8" stroke="#9cb8ec" stroke-width="1.1"/><path d="M0 12.5 L1.3 9.5 L2.6 12.5Z" fill="#4caf50"/></svg><svg width="12" height="13" style="left:261.0px;top:440.5px" viewBox="0 0 13 14"><path d="M0.6 13.2 Q0.8 8.6 4.4 8.2 H8.8 Q12.2 8.6 12.4 13.2 Q6.5 14.6 0.6 13.2Z" fill="#4a97f0" stroke="#2b6fd0" stroke-width=".6"/><path d="M0.4 12.2 L1.6 10.4 M12.6 12.2 L11.4 10.4" stroke="#f29a3a" stroke-width="1.4"/><ellipse cx="6.7" cy="5.4" rx="3.2" ry="3.1" fill="#f8cfa0" stroke="#c98a4e" stroke-width=".5"/><path d="M3.2 5.4 Q3 1.2 6.8 1.2 Q10.4 1.4 10.2 5.4 Q8.6 3.2 6.2 3.6 Q4.4 3.6 3.2 5.4Z" fill="#9a4a16"/></svg>
<i class="cb" style="left:275.2px;top:440px"></i>
<span class="t" style="top:436.8px;font:normal 9.5px/20px 'Liberation Sans',sans-serif;color:#4a0352;left:289px;letter-spacing:-0.050px;">Owner of Business (Ind)</span>
<div style="left:227.5px;top:464px;width:11.5px;height:0;border-top:1px dotted #b4b4b4"></div>
<svg width="12" height="14" style="left:241px;top:457.5px" viewBox="0 0 12 14"><path d="M0.8 0.6 H8.2 L11.2 3.6 V13.4 H0.8Z" fill="#fdfdfd" stroke="#d0d0d0" stroke-width=".8"/><path d="M2.8 4.4 H8.6 M2.8 6.2 H9.2 M2.8 8 H9.2 M2.8 9.8 H9.2 M2.8 11.6 H9.2" stroke="#b4b4b4" stroke-width=".9"/></svg>
<i class="cb on" style="left:257.2px;top:458px"></i>
<span class="t" style="top:454.8px;font:normal 9.5px/20px 'Liberation Sans',sans-serif;color:#4a0352;left:271px;letter-spacing:-0.098px;">Dealer License Information</span>
<div style="left:227.5px;top:482px;width:11.5px;height:0;border-top:1px dotted #b4b4b4"></div>
<svg width="12" height="14" style="left:241px;top:475.5px" viewBox="0 0 12 14"><path d="M0.8 0.6 H8.2 L11.2 3.6 V13.4 H0.8Z" fill="#fdfdfd" stroke="#d0d0d0" stroke-width=".8"/><path d="M2.8 4.4 H8.6 M2.8 6.2 H9.2 M2.8 8 H9.2 M2.8 9.8 H9.2 M2.8 11.6 H9.2" stroke="#b4b4b4" stroke-width=".9"/></svg>
<i class="cb on" style="left:257.2px;top:476px"></i>
<span class="t" style="top:472.8px;font:normal 9.5px/20px 'Liberation Sans',sans-serif;color:#4a0352;left:271px;letter-spacing:-0.134px;">Permit Extended Attributes</span>
<div style="left:232.5px;top:500px;width:6.5px;height:0;border-top:1px dotted #b4b4b4"></div>
<div style="left:223.0px;top:494.7px;width:9px;height:9px;border:1px solid #9fb3cf;border-radius:1.5px;background:linear-gradient(#fff,#e4ecf5)"></div><div style="left:225.0px;top:498.7px;width:5px;height:1px;background:#222"></div>
<div style="left:245.0px;top:508px;width:0;height:172px;border-left:1px dotted #b4b4b4"></div>
<svg width="13" height="14" style="left:241px;top:493.5px" viewBox="0 0 13 14"><circle cx="6.5" cy="2" r="1.3" fill="none" stroke="#b4b8be" stroke-width="1"/><path d="M6.5 3.2 V12.6 M3.8 5.4 H9.2 M0.8 8.4 Q2 12.6 6.5 12.8 Q11 12.6 12.2 8.4" fill="none" stroke="#aeb3ba" stroke-width="1.5"/></svg>
<i class="cb" style="left:257.2px;top:494px"></i>
<span class="t" style="top:490.8px;font:bold 8.5px/20px 'DejaVu Sans',sans-serif;color:#4a0352;left:271px;letter-spacing:0.052px;">Vessel</span>
<div style="left:245.5px;top:518px;width:11.5px;height:0;border-top:1px dotted #b4b4b4"></div>
<svg width="13" height="14" style="left:259px;top:511.5px" viewBox="0 0 13 14"><path d="M3 2.6 H10 V13 H3Z" fill="#f1f3f7" stroke="#aab1be" stroke-width=".8"/><path d="M4.2 4.4 H8.8 M4.2 6.3 H8.8 M4.2 8.2 H8.8" stroke="#9cb8ec" stroke-width="1.1"/><path d="M5.2 10.2 H7.8 V13 H5.2Z" fill="#8a8a8a"/><path d="M0.2 13.5 L1.6 10 L3 13.5Z M10 13.5 L11.4 10 L12.8 13.5Z" fill="#58b558"/><path d="M0 13.6 H13" stroke="#7aa86a" stroke-width=".8"/><circle cx="8.6" cy="1.3" r="1" fill="#e04a4a"/><path d="M8.6 1.6 V2.6" stroke="#999" stroke-width=".8"/></svg>
<i class="cb" style="left:275.2px;top:512px"></i>
<span class="t" style="top:508.79999999999995px;font:normal 9.5px/20px 'Liberation Sans',sans-serif;color:#4a0352;left:289px;letter-spacing:-0.091px;">Owner of Vessel (Bus)</span>
<div style="left:245.5px;top:536px;width:11.5px;height:0;border-top:1px dotted #b4b4b4"></div>
<svg width="9" height="12" style="left:256.5px;top:529px" viewBox="0 0 9 12"><path d="M5 0.8 V9 M2.5 3 H7.5 M0.6 6.5 Q2 10.5 5 10.8 Q8 10.5 8.6 7" fill="none" stroke="#b9bec6" stroke-width="1.5"/></svg><svg width="12" height="13" style="left:261.0px;top:530.5px" viewBox="0 0 13 14"><path d="M0.6 13.2 Q0.8 8.6 4.4 8.2 H8.8 Q12.2 8.6 12.4 13.2 Q6.5 14.6 0.6 13.2Z" fill="#4a97f0" stroke="#2b6fd0" stroke-width=".6"/><path d="M0.4 12.2 L1.6 10.4 M12.6 12.2 L11.4 10.4" stroke="#f29a3a" stroke-width="1.4"/><ellipse cx="6.7" cy="5.4" rx="3.2" ry="3.1" fill="#f8cfa0" stroke="#c98a4e" stroke-width=".5"/><path d="M3.2 5.4 Q3 1.2 6.8 1.2 Q10.4 1.4 10.2 5.4 Q8.6 3.2 6.2 3.6 Q4.4 3.6 3.2 5.4Z" fill="#9a4a16"/></svg>
<i class="cb" style="left:275.2px;top:530px"></i>
<span class="t" style="top:526.8px;font:normal 9.5px/20px 'Liberation Sans',sans-serif;color:#4a0352;left:289px;letter-spacing:0.019px;">Owner of Vessel (Ind)</span>
<div style="left:250.5px;top:554px;width:6.5px;height:0;border-top:1px dotted #b4b4b4"></div>
<div style="left:241.0px;top:548.7px;width:9px;height:9px;border:1px solid #9fb3cf;border-radius:1.5px;background:linear-gradient(#fff,#e4ecf5)"></div><div style="left:243.0px;top:552.7px;width:5px;height:1px;background:#222"></div>
<div style="left:263.0px;top:562px;width:0;height:28px;border-left:1px dotted #b4b4b4"></div>
<svg width="14" height="15" style="left:259px;top:547.5px" viewBox="0 0 14 15"><path d="M1 3 Q4 0.6 7 2.2 Q9.6 3.4 11.6 1.4 L10.6 8.4 Q8 10.4 5.6 9 Q3 7.8 0.6 9.6Z" fill="#f7b26a" stroke="#e08a3a" stroke-width=".7"/><path d="M11.8 0.6 L9.6 14" stroke="#b9742e" stroke-width="1.6"/><path d="M3.4 4.4 Q5.4 3.4 7 5 " stroke="#fde0bd" stroke-width="1" fill="none"/></svg>
<i class="cb" style="left:275.2px;top:548px"></i>
<span class="t" style="top:544.8px;font:bold 8.75px/20px 'DejaVu Sans',sans-serif;color:#4a0352;left:289px;letter-spacing:-0.063px;">Foreign Vessel Flag</span>
<div style="left:263.5px;top:572px;width:11.5px;height:0;border-top:1px dotted #b4b4b4"></div>
<svg width="11" height="14" style="left:280.5px;top:564px" viewBox="0 0 11 14"><path d="M0.6 2.6 Q3 0.8 5 2 Q7 3 8.6 1.4 L7.8 7.6 Q6 9 4 8 Q2 7 0.2 8.4Z" fill="#f7b26a" stroke="#e08a3a" stroke-width=".7"/><path d="M9.2 0.4 L7.4 13.6" stroke="#b9742e" stroke-width="1.5"/></svg><svg width="11" height="12" style="left:275.5px;top:568px" viewBox="0 0 13 14"><path d="M0.6 13.2 Q0.8 8.6 4.4 8.2 H8.8 Q12.2 8.6 12.4 13.2 Q6.5 14.6 0.6 13.2Z" fill="#4a97f0" stroke="#2b6fd0" stroke-width=".6"/><ellipse cx="6.7" cy="5.4" rx="3.2" ry="3.1" fill="#f8cfa0" stroke="#c98a4e" stroke-width=".5"/><path d="M3 4.6 Q6.5 0.4 10.4 3.8 L10 5.2 H3.2Z" fill="#2d2d45"/></svg>
<i class="cb" style="left:293.2px;top:566px"></i>
<span class="t" style="top:562.8px;font:normal 9.5px/20px 'Liberation Sans',sans-serif;color:#4a0352;left:307px;letter-spacing:-0.223px;">Foreign Vessel Owner</span>
<div style="left:263.5px;top:590px;width:11.5px;height:0;border-top:1px dotted #b4b4b4"></div>
<svg width="11" height="14" style="left:280.5px;top:582px" viewBox="0 0 11 14"><path d="M0.6 2.6 Q3 0.8 5 2 Q7 3 8.6 1.4 L7.8 7.6 Q6 9 4 8 Q2 7 0.2 8.4Z" fill="#f7b26a" stroke="#e08a3a" stroke-width=".7"/><path d="M9.2 0.4 L7.4 13.6" stroke="#b9742e" stroke-width="1.5"/></svg><svg width="11" height="12" style="left:275.5px;top:586px" viewBox="0 0 13 14"><path d="M0.6 13.2 Q0.8 8.6 4.4 8.2 H8.8 Q12.2 8.6 12.4 13.2 Q6.5 14.6 0.6 13.2Z" fill="#4a97f0" stroke="#2b6fd0" stroke-width=".6"/><ellipse cx="6.7" cy="5.4" rx="3.2" ry="3.1" fill="#f8cfa0" stroke="#c98a4e" stroke-width=".5"/><path d="M3 4.6 Q6.5 0.4 10.4 3.8 L10 5.2 H3.2Z" fill="#2d2d45"/></svg>
<i class="cb" style="left:293.2px;top:584px"></i>
<span class="t" style="top:580.8px;font:normal 9.5px/20px 'Liberation Sans',sans-serif;color:#4a0352;left:307px;letter-spacing:-0.208px;">Foreign Vessel Operator</span>
<div style="left:245.5px;top:608px;width:11.5px;height:0;border-top:1px dotted #b4b4b4"></div>
<svg width="13" height="14" style="left:259px;top:601.5px" viewBox="0 0 13 14"><path d="M0.6 13.2 Q0.8 8.6 4.4 8.2 H8.8 Q12.2 8.6 12.4 13.2 Q6.5 14.6 0.6 13.2Z" fill="#4a97f0" stroke="#2b6fd0" stroke-width=".6"/><path d="M0.4 12.2 L1.6 10.4 M12.6 12.2 L11.4 10.4" stroke="#f29a3a" stroke-width="1.4"/><ellipse cx="6.7" cy="5.4" rx="3.2" ry="3.1" fill="#f8cfa0" stroke="#c98a4e" stroke-width=".5"/><path d="M3 4.2 Q6.5 0.2 10.4 3.6 L10 5 H3.2Z" fill="#3a5fb0"/><path d="M4 3.4 H9.4" stroke="#e8e8e8" stroke-width=".8"/></svg>
<i class="cb" style="left:275.2px;top:602px"></i>
<span class="t" style="top:598.8px;font:normal 9.5px/20px 'Liberation Sans',sans-serif;color:#4a0352;left:289px;letter-spacing:-0.005px;">Operator of Vessel (Ind)</span>
<div style="left:250.5px;top:626px;width:6.5px;height:0;border-top:1px dotted #b4b4b4"></div>
<div style="left:241.0px;top:620.7px;width:9px;height:9px;border:1px solid #9fb3cf;border-radius:1.5px;background:linear-gradient(#fff,#e4ecf5)"></div><div style="left:243.0px;top:624.7px;width:5px;height:1px;background:#222"></div>
<div style="left:263.0px;top:634px;width:0;height:10px;border-left:1px dotted #b4b4b4"></div>
<svg width="13" height="14" style="left:259px;top:619.5px" viewBox="0 0 13 14"><path d="M3 2.6 H10 V13 H3Z" fill="#f1f3f7" stroke="#aab1be" stroke-width=".8"/><path d="M4.2 4.4 H8.8 M4.2 6.3 H8.8 M4.2 8.2 H8.8" stroke="#9cb8ec" stroke-width="1.1"/><path d="M5.2 10.2 H7.8 V13 H5.2Z" fill="#8a8a8a"/><path d="M0.2 13.5 L1.6 10 L3 13.5Z M10 13.5 L11.4 10 L12.8 13.5Z" fill="#58b558"/><path d="M0 13.6 H13" stroke="#7aa86a" stroke-width=".8"/><circle cx="8.6" cy="1.3" r="1" fill="#e04a4a"/><path d="M8.6 1.6 V2.6" stroke="#999" stroke-width=".8"/></svg>
<i class="cb" style="left:275.2px;top:620px"></i>
<span class="t" style="top:616.8px;font:bold 8.5px/20px 'DejaVu Sans',sans-serif;color:#4a0352;left:289px;letter-spacing:0.070px;">Operator of Vessel (Bus)</span>
<div style="left:263.5px;top:644px;width:11.5px;height:0;border-top:1px dotted #b4b4b4"></div>
<svg width="9" height="13" style="left:275.0px;top:636.5px" viewBox="0 0 9 13"><path d="M2 1.5 H8.5 V12 H2Z" fill="#f1f3f7" stroke="#aab1be" stroke-width=".8"/><path d="M3 3.2 H8 M3 5.1 H8 M3 7 H8" stroke="#9cb8ec" stroke-width="1.1"/><path d="M0 12.5 L1.3 9.5 L2.6 12.5Z" fill="#4caf50"/></svg><svg width="12" height="13" style="left:279.0px;top:638.5px" viewBox="0 0 13 14"><path d="M0.6 13.2 Q0.8 8.6 4.4 8.2 H8.8 Q12.2 8.6 12.4 13.2 Q6.5 14.6 0.6 13.2Z" fill="#4a97f0" stroke="#2b6fd0" stroke-width=".6"/><path d="M0.4 12.2 L1.6 10.4 M12.6 12.2 L11.4 10.4" stroke="#f29a3a" stroke-width="1.4"/><ellipse cx="6.7" cy="5.4" rx="3.2" ry="3.1" fill="#f8cfa0" stroke="#c98a4e" stroke-width=".5"/><path d="M3.2 5.4 Q3 1.2 6.8 1.2 Q10.4 1.4 10.2 5.4 Q8.6 3.2 6.2 3.6 Q4.4 3.6 3.2 5.4Z" fill="#9a4a16"/></svg>
<i class="cb" style="left:293.2px;top:638px"></i>
<span class="t" style="top:634.8px;font:normal 9.5px/20px 'Liberation Sans',sans-serif;color:#4a0352;left:307px;letter-spacing:-0.050px;">Owner of Business (Ind)</span>
<div style="left:245.5px;top:662px;width:11.5px;height:0;border-top:1px dotted #b4b4b4"></div>
<svg width="15" height="15" style="left:258px;top:654.5px" viewBox="0 0 15 15"><circle cx="9" cy="3.6" r="2.4" fill="#f8cfa0" stroke="#c98a4e" stroke-width=".5"/><path d="M6.6 3 Q9 -0.4 11.4 3Z" fill="#9a4a16"/><path d="M4.4 9.4 Q5 6.2 7.4 6 H10.6 Q13.2 6.4 13.6 9.6Z" fill="#4a97f0"/><path d="M0.8 7.6 H12.6 V14.2 H0.8Z" fill="#fde9a8" stroke="#e0a020" stroke-width="1"/><path d="M2.6 10 H10.8 M2.6 12 H8.6" stroke="#e8b840" stroke-width="1"/></svg>
<i class="cb" style="left:275.2px;top:656px"></i>
<span class="t" style="top:652.8px;font:normal 9.5px/20px 'Liberation Sans',sans-serif;color:#4a0352;left:289px;letter-spacing:-0.373px;">Sanction</span>
<div style="left:245.5px;top:680px;width:11.5px;height:0;border-top:1px dotted #b4b4b4"></div>
<svg width="15" height="15" style="left:259px;top:672.5px" viewBox="0 0 15 15"><path d="M0.4 2.2 Q2.6 0.6 4.4 2.6 Q8.6 2 10.6 5.6 Q12.4 9 11.8 12 L13.6 14.4 L10.4 13.6 Q10.6 10 8.4 8 Q5.6 8.6 3.4 6.6 Q1.6 5 2.6 3.4Z" fill="#111"/><path d="M5.8 6.6 Q8 6.6 9.2 8.6 Q7.4 8.8 5.8 6.6Z M9.6 9.8 Q11 11.4 10.8 13 Q9.8 11.6 9.6 9.8Z" fill="#fff"/><path d="M7.4 2.8 L9.4 0.6 L9.8 3.8Z" fill="#111"/></svg>
<i class="cb" style="left:275.2px;top:674px"></i>
<span class="t" style="top:670.8px;font:normal 9.5px/20px 'Liberation Sans',sans-serif;color:#4a0352;left:289px;letter-spacing:-0.209px;">Marine Mammal Safety</span>
<div style="left:227.5px;top:698px;width:11.5px;height:0;border-top:1px dotted #b4b4b4"></div>
<svg width="14" height="14" style="left:241px;top:691.5px" viewBox="0 0 14 14"><circle cx="7" cy="7" r="6.6" fill="#2f8df0"/><path d="M0.8 5 A6.6 6.6 0 0 1 13.2 5 Q10 5 7 9.4 Q4 5 0.8 5Z" fill="#1a2fb0"/><path d="M0.8 5.4 Q4.2 5 7 9.6 Q9.8 5 13.2 5.4 Q10 6.6 8 11 H6 Q4 6.6 0.8 5.4Z" fill="#fff"/></svg>
<i class="cb" style="left:257.2px;top:692px"></i>
<span class="t" style="top:688.8px;font:normal 9.5px/20px 'Liberation Sans',sans-serif;color:#4a0352;left:271px;letter-spacing:-0.197px;">For Office Use Only</span>
<div style="left:227.5px;top:716px;width:11.5px;height:0;border-top:1px dotted #b4b4b4"></div>
<svg width="12" height="14" style="left:241px;top:709.5px" viewBox="0 0 12 14"><path d="M0.8 0.6 H8.2 L11.2 3.6 V13.4 H0.8Z" fill="#fdfdfd" stroke="#d0d0d0" stroke-width=".8"/><path d="M2.8 4.4 H8.6 M2.8 6.2 H9.2 M2.8 8 H9.2 M2.8 9.8 H9.2 M2.8 11.6 H9.2" stroke="#b4b4b4" stroke-width=".9"/></svg>
<i class="cb" style="left:257.2px;top:710px"></i>
<span class="t" style="top:706.8px;font:normal 9.5px/20px 'Liberation Sans',sans-serif;color:#4a0352;left:271px;letter-spacing:-0.279px;">Authorized Gear</span>
<div style="left:232.5px;top:734px;width:6.5px;height:0;border-top:1px dotted #b4b4b4"></div>
<div style="left:223.0px;top:728.7px;width:9px;height:9px;border:1px solid #9fb3cf;border-radius:1.5px;background:linear-gradient(#fff,#e4ecf5)"></div><div style="left:225.0px;top:732.7px;width:5px;height:1px;background:#222"></div>
<div style="left:245.0px;top:742px;width:0;height:28px;border-left:1px dotted #b4b4b4"></div>
<svg width="12" height="14" style="left:241px;top:727.5px" viewBox="0 0 12 14"><path d="M0.8 0.6 H8.2 L11.2 3.6 V13.4 H0.8Z" fill="#fdfdfd" stroke="#d0d0d0" stroke-width=".8"/><path d="M2.8 4.4 H8.6 M2.8 6.2 H9.2 M2.8 8 H9.2 M2.8 9.8 H9.2 M2.8 11.6 H9.2" stroke="#b4b4b4" stroke-width=".9"/></svg>
<i class="cb" style="left:257.2px;top:728px"></i>
<span class="t" style="top:724.8px;font:bold 8.5px/20px 'DejaVu Sans',sans-serif;color:#4a0352;left:271px;letter-spacing:-0.007px;">Vessel Processor</span>
<div style="left:245.5px;top:752px;width:11.5px;height:0;border-top:1px dotted #b4b4b4"></div>
<svg width="13" height="14" style="left:259px;top:745.5px" viewBox="0 0 13 14"><path d="M3 2.6 H10 V13 H3Z" fill="#f1f3f7" stroke="#aab1be" stroke-width=".8"/><path d="M4.2 4.4 H8.8 M4.2 6.3 H8.8 M4.2 8.2 H8.8" stroke="#9cb8ec" stroke-width="1.1"/><path d="M5.2 10.2 H7.8 V13 H5.2Z" fill="#8a8a8a"/><path d="M0.2 13.5 L1.6 10 L3 13.5Z M10 13.5 L11.4 10 L12.8 13.5Z" fill="#58b558"/><path d="M0 13.6 H13" stroke="#7aa86a" stroke-width=".8"/><circle cx="8.6" cy="1.3" r="1" fill="#e04a4a"/><path d="M8.6 1.6 V2.6" stroke="#999" stroke-width=".8"/></svg>
<i class="cb" style="left:275.2px;top:746px"></i>
<span class="t" style="top:742.8px;font:normal 9.5px/20px 'Liberation Sans',sans-serif;color:#4a0352;left:289px;letter-spacing:-0.091px;">Owner of Vessel (Bus)</span>
<div style="left:245.5px;top:770px;width:11.5px;height:0;border-top:1px dotted #b4b4b4"></div>
<svg width="9" height="12" style="left:256.5px;top:763px" viewBox="0 0 9 12"><path d="M5 0.8 V9 M2.5 3 H7.5 M0.6 6.5 Q2 10.5 5 10.8 Q8 10.5 8.6 7" fill="none" stroke="#b9bec6" stroke-width="1.5"/></svg><svg width="12" height="13" style="left:261.0px;top:764.5px" viewBox="0 0 13 14"><path d="M0.6 13.2 Q0.8 8.6 4.4 8.2 H8.8 Q12.2 8.6 12.4 13.2 Q6.5 14.6 0.6 13.2Z" fill="#4a97f0" stroke="#2b6fd0" stroke-width=".6"/><path d="M0.4 12.2 L1.6 10.4 M12.6 12.2 L11.4 10.4" stroke="#f29a3a" stroke-width="1.4"/><ellipse cx="6.7" cy="5.4" rx="3.2" ry="3.1" fill="#f8cfa0" stroke="#c98a4e" stroke-width=".5"/><path d="M3.2 5.4 Q3 1.2 6.8 1.2 Q10.4 1.4 10.2 5.4 Q8.6 3.2 6.2 3.6 Q4.4 3.6 3.2 5.4Z" fill="#9a4a16"/></svg>
<i class="cb" style="left:275.2px;top:764px"></i>
<span class="t" style="top:760.8px;font:normal 9.5px/20px 'Liberation Sans',sans-serif;color:#4a0352;left:289px;letter-spacing:0.019px;">Owner of Vessel (Ind)</span>
<div style="left:227.5px;top:788px;width:11.5px;height:0;border-top:1px dotted #b4b4b4"></div>
<svg width="13" height="14" style="left:241px;top:781.5px" viewBox="0 0 13 14"><path d="M0.6 13.2 Q0.8 8.6 4.4 8.2 H8.8 Q12.2 8.6 12.4 13.2 Q6.5 14.6 0.6 13.2Z" fill="#4a97f0" stroke="#2b6fd0" stroke-width=".6"/><path d="M0.4 12.2 L1.6 10.4 M12.6 12.2 L11.4 10.4" stroke="#f29a3a" stroke-width="1.4"/><ellipse cx="6.7" cy="5.4" rx="3.2" ry="3.1" fill="#f8cfa0" stroke="#c98a4e" stroke-width=".5"/><path d="M3 4.2 Q6.5 0.2 10.4 3.6 L10 5 H3.2Z" fill="#3a5fb0"/><path d="M4 3.4 H9.4" stroke="#e8e8e8" stroke-width=".8"/></svg>
<i class="cb" style="left:257.2px;top:782px"></i>
<span class="t" style="top:778.8px;font:normal 9.5px/20px 'Liberation Sans',sans-serif;color:#4a0352;left:271px;letter-spacing:-0.165px;">Captain Of Vessel</span>
<div style="left:227.5px;top:806px;width:11.5px;height:0;border-top:1px dotted #b4b4b4"></div>
<svg width="13" height="14" style="left:241px;top:799.5px" viewBox="0 0 13 14"><path d="M0.6 13.2 Q0.8 8.6 4.4 8.2 H8.8 Q12.2 8.6 12.4 13.2 Q6.5 14.6 0.6 13.2Z" fill="#4a97f0" stroke="#2b6fd0" stroke-width=".6"/><path d="M0.4 12.2 L1.6 10.4 M12.6 12.2 L11.4 10.4" stroke="#f29a3a" stroke-width="1.4"/><ellipse cx="6.7" cy="5.4" rx="3.2" ry="3.1" fill="#f8cfa0" stroke="#c98a4e" stroke-width=".5"/><path d="M3.2 5.4 Q3 1.2 6.8 1.2 Q10.4 1.4 10.2 5.4 Q8.6 3.2 6.2 3.6 Q4.4 3.6 3.2 5.4Z" fill="#9a4a16"/></svg>
<i class="cb on" style="left:257.2px;top:800px"></i>
<span class="t" style="top:796.8px;font:normal 9.5px/20px 'Liberation Sans',sans-serif;color:#4a0352;left:271px;letter-spacing:-0.150px;">Applicant Of Permit</span>
<span class="t" style="top:287.8px;font:normal 12.25px/20px 'Liberation Sans',sans-serif;color:#222;left:458.2px;letter-spacing:-0.070px;">SECTION:</span>
<span class="t" style="top:287.8px;font:bold 11.75px/20px 'DejaVu Sans',sans-serif;color:#111;left:520.5px;letter-spacing:-0.074px;">Owner of Permit</span>
<span class="t" style="top:288.3px;font:normal 9.75px/20px 'DejaVu Sans',sans-serif;color:#0a0a0a;left:1421.2px;">Display sequence:</span>
<div style="left:1514px;top:289px;width:48px;height:16px;background:#f5f5f5;border:1px solid #a5a5a5;"></div>
<span class="t" style="top:288.3px;font:normal 8.75px/20px 'DejaVu Sans',sans-serif;color:#111;left:1520px;letter-spacing:-0.041px;">1.4</span>
<svg width="7" height="6" style="left:1548.5px;top:294px" viewBox="0 0 7 6"><path d="M0 0 H7 L3.5 6Z" fill="#111"/></svg>
<div style="left:453px;top:314px;width:1114px;height:276px;background:#fff;border:1px solid #a8a8a8;"></div>
<span class="t" style="top:314.5px;font:bold 9.75px/20px 'DejaVu Sans',sans-serif;color:#111;left:457.5px;">Section Title:</span>
<span class="t" style="top:314.5px;font:normal 9.0px/20px 'DejaVu Sans',sans-serif;color:#0a0a0a;left:534.5px;letter-spacing:0.060px;">(max 500 chars)</span>
<div style="left:457px;top:330px;width:1106px;height:28px;background:#f5f5f5;border:1px solid #a8a8a8;border-top-color:#9a9a9a;"></div>
<span class="t" style="top:330.2px;font:normal 10.0px/20px 'DejaVu Sans',sans-serif;color:#111;left:460.5px;letter-spacing:0.034px;">FOREIGN BASED INDIVIDUAL INFORMATION</span>
<svg width="9" height="9" style="left:1553px;top:348px" viewBox="0 0 9 9"><path d="M8.5 0.5 L0.5 8.5 M8.5 4.5 L4.5 8.5" stroke="#777" stroke-width="1"/></svg>
<span class="t" style="top:357.3px;font:bold 10.25px/20px 'DejaVu Sans',sans-serif;color:#111;left:457.5px;letter-spacing:0.054px;">Instructions/Remarks:</span>
<span class="t" style="top:358.3px;font:normal 9.25px/20px 'DejaVu Sans',sans-serif;color:#0a0a0a;left:590.5px;letter-spacing:-0.046px;">(max 4000 chars)</span>
<div style="left:457px;top:373px;width:1106px;height:52px;background:#f5f5f5;border:1px solid #a8a8a8;border-top-color:#9a9a9a;"></div>
<span class="t" style="top:372.8px;font:normal 9.75px/20px 'DejaVu Sans',sans-serif;color:#111;left:460.5px;letter-spacing:-0.040px;">Enter the requested information.</span>
<svg width="9" height="9" style="left:1553px;top:415px" viewBox="0 0 9 9"><path d="M8.5 0.5 L0.5 8.5 M8.5 4.5 L4.5 8.5" stroke="#777" stroke-width="1"/></svg>
<i class="cb" style="left:462.3px;top:431px"></i>
<span class="t" style="top:427.5px;font:normal 9.75px/20px 'DejaVu Sans',sans-serif;color:#0a0a0a;left:482.5px;letter-spacing:0.032px;">Repeating Section: Check if the applicant can provide multiple entries of this section (ex. multiple owners)</span>
<i class="cb on" style="left:462.3px;top:451px"></i>
<span class="t" style="top:445px;font:normal 9.75px/20px 'DejaVu Sans',sans-serif;color:#0a0a0a;left:482.5px;">Conditional Section: Check if certain conditions must be met for this section to be displayed</span>
<div style="left:482px;top:469px;width:1081px;height:119px;background:#f5f5f5;border:1px solid #a8a8a8;"></div>
<div style="left:487px;top:472.5px;width:1073px;height:17px;background:#fff;border-bottom:1px solid #e6e6e6;"></div>
<span class="t" style="top:472.8px;font:normal 9.75px/20px 'DejaVu Sans',sans-serif;color:#0a0a0a;left:490px;">This section (Owner of Permit) will be displayed if answers provided by the applicant match the answers to the questions defined below:</span>
<span class="t" style="top:490.3px;font:bold 8.75px/20px 'DejaVu Sans',sans-serif;color:#1b6878;left:490.7px;letter-spacing:0.031px;">Q:</span>
<span class="t" style="top:490.3px;font:normal 9.75px/20px 'DejaVu Sans',sans-serif;color:#0a0a0a;left:509.5px;letter-spacing:0.049px;">Is the applicant a(n):</span>
<span class="t" style="top:506.29999999999995px;font:bold 9.25px/20px 'DejaVu Sans',sans-serif;color:#1b6878;left:490.7px;letter-spacing:-0.016px;">A:</span>
<i class="cb" style="left:512.8px;top:511.5px"></i>
<span class="t" style="top:506.29999999999995px;font:normal 9.75px/20px 'DejaVu Sans',sans-serif;color:#0a0a0a;left:534.2px;">Business based in the United States</span>
<i class="cb" style="left:512.8px;top:531.5px"></i>
<span class="t" style="top:526.3px;font:normal 9.75px/20px 'DejaVu Sans',sans-serif;color:#0a0a0a;left:534.2px;letter-spacing:-0.026px;">Business based in a foreign nation</span>
<i class="cb" style="left:512.8px;top:551.5px"></i>
<span class="t" style="top:546.3px;font:normal 9.75px/20px 'DejaVu Sans',sans-serif;color:#0a0a0a;left:534.2px;letter-spacing:0.034px;">Individual based in the United States</span>
<i class="cb on" style="left:512.8px;top:571.5px"></i>
<span class="t" style="top:566.3px;font:normal 9.75px/20px 'DejaVu Sans',sans-serif;color:#0a0a0a;left:534.2px;letter-spacing:0.012px;">Individual based in a foreign nation</span>
<div style="left:453px;top:598px;width:1114px;height:197px;background:#fff;border:1px solid #a3a3a3;"></div>
<div style="left:454px;top:599px;width:1112px;height:27px;background:#e6e6e6;"></div>
<div style="left:1377px;top:598px;width:1px;height:197px;background:#a3a3a3;"></div>
<div style="left:1409px;top:598px;width:1px;height:197px;background:#a3a3a3;"></div>
<div style="left:1435px;top:598px;width:1px;height:197px;background:#a3a3a3;"></div>
<div style="left:1461px;top:598px;width:1px;height:197px;background:#a3a3a3;"></div>
<div style="left:1487px;top:598px;width:1px;height:197px;background:#a3a3a3;"></div>
<div style="left:1528px;top:598px;width:1px;height:197px;background:#a3a3a3;"></div>
<div style="left:453px;top:626px;width:1114px;height:1px;background:#a3a3a3;"></div>
<div style="left:453px;top:647px;width:1114px;height:1px;background:#a3a3a3;"></div>
<div style="left:453px;top:668px;width:1114px;height:1px;background:#a3a3a3;"></div>
<div style="left:453px;top:689px;width:1114px;height:1px;background:#a3a3a3;"></div>
<div style="left:453px;top:710px;width:1114px;height:1px;background:#a3a3a3;"></div>
<div style="left:453px;top:731px;width:1114px;height:1px;background:#a3a3a3;"></div>
<div style="left:453px;top:752px;width:1114px;height:1px;background:#a3a3a3;"></div>
<div style="left:453px;top:773px;width:1114px;height:1px;background:#a3a3a3;"></div>
<span class="t" style="top:610.2px;font:bold 9.75px/20px 'DejaVu Sans',sans-serif;color:#111;left:457.2px;letter-spacing:-0.050px;">Section Fields</span>
<span class="t" style="top:610.8px;font:bold 7.25px/20px 'DejaVu Sans',sans-serif;color:#2f9a32;left:1383px;letter-spacing:0.220px;">Type</span>
<span class="t" style="top:610.8px;font:bold 7.25px/20px 'DejaVu Sans',sans-serif;color:#2f9a32;left:1415.4px;letter-spacing:-0.014px;">Incl</span>
<span class="t" style="top:610.8px;font:bold 7.25px/20px 'DejaVu Sans',sans-serif;color:#2f9a32;left:1440.7px;letter-spacing:-0.234px;">Req</span>
<span class="t" style="top:610.8px;font:bold 7.25px/20px 'DejaVu Sans',sans-serif;color:#2f9a32;left:1466.4px;letter-spacing:0.731px;">R/O</span>
<span class="t" style="top:610.8px;font:bold 7.25px/20px 'DejaVu Sans',sans-serif;color:#2f9a32;left:1500px;letter-spacing:-0.181px;">Seq</span>
<span class="t" style="top:610.8px;font:bold 7.25px/20px 'DejaVu Sans',sans-serif;color:#1a1a7a;left:1532.6px;letter-spacing:-0.022px;">More...</span>
<svg width="14" height="14" style="left:1414.6px;top:602px" viewBox="0 0 14 14"><circle cx="7" cy="7" r="6.2" fill="#efefef" stroke="#c6c6c6" stroke-width=".9" stroke-dasharray="1 .9"/><circle cx="7" cy="7" r="4.6" fill="#a6a6a6"/><circle cx="7" cy="7" r="4.6" fill="none" stroke="#c4c4c4" stroke-width=".8"/><path d="M5.3 5.9 Q5.3 4.1 7 4.1 Q8.7 4.1 8.7 5.6 Q8.7 6.6 7 7.3 V8.3" fill="none" stroke="#fff" stroke-width="1.3"/><circle cx="7" cy="9.9" r=".8" fill="#fff"/></svg>
<svg width="14" height="14" style="left:1440.6px;top:602px" viewBox="0 0 14 14"><circle cx="7" cy="7" r="6.2" fill="#efefef" stroke="#c6c6c6" stroke-width=".9" stroke-dasharray="1 .9"/><circle cx="7" cy="7" r="4.6" fill="#a6a6a6"/><circle cx="7" cy="7" r="4.6" fill="none" stroke="#c4c4c4" stroke-width=".8"/><path d="M5.3 5.9 Q5.3 4.1 7 4.1 Q8.7 4.1 8.7 5.6 Q8.7 6.6 7 7.3 V8.3" fill="none" stroke="#fff" stroke-width="1.3"/><circle cx="7" cy="9.9" r=".8" fill="#fff"/></svg>
<svg width="14" height="14" style="left:1466.6px;top:602px" viewBox="0 0 14 14"><circle cx="7" cy="7" r="6.2" fill="#efefef" stroke="#c6c6c6" stroke-width=".9" stroke-dasharray="1 .9"/><circle cx="7" cy="7" r="4.6" fill="#a6a6a6"/><circle cx="7" cy="7" r="4.6" fill="none" stroke="#c4c4c4" stroke-width=".8"/><path d="M5.3 5.9 Q5.3 4.1 7 4.1 Q8.7 4.1 8.7 5.6 Q8.7 6.6 7 7.3 V8.3" fill="none" stroke="#fff" stroke-width="1.3"/><circle cx="7" cy="9.9" r=".8" fill="#fff"/></svg>
<svg width="14" height="14" style="left:1499.4px;top:602px" viewBox="0 0 14 14"><circle cx="7" cy="7" r="6.2" fill="#efefef" stroke="#c6c6c6" stroke-width=".9" stroke-dasharray="1 .9"/><circle cx="7" cy="7" r="4.6" fill="#a6a6a6"/><circle cx="7" cy="7" r="4.6" fill="none" stroke="#c4c4c4" stroke-width=".8"/><path d="M5.3 5.9 Q5.3 4.1 7 4.1 Q8.7 4.1 8.7 5.6 Q8.7 6.6 7 7.3 V8.3" fill="none" stroke="#fff" stroke-width="1.3"/><circle cx="7" cy="9.9" r=".8" fill="#fff"/></svg>
<span class="t" style="top:628.7px;font:normal 10.0px/20px 'DejaVu Sans',sans-serif;color:#111;left:457.5px;letter-spacing:-0.053px;">Full Name</span>
<div class="t" style="top:627.7px;font:normal 10.25px/20px 'DejaVu Sans',sans-serif;color:#111;left:1093.7px;width:600px;text-align:center;letter-spacing:-0.015px;"><span>Set</span></div>
<i class="cb on" style="left:1417.2px;top:633.3px"></i>
<i class="cb on" style="left:1443.2px;top:633.3px"></i>
<i class="cb" style="left:1469.2px;top:633.3px"></i>
<div style="left:1491px;top:630px;width:33px;height:16px;background:#f6f6f6;border:1px solid #d9d9d9;border-top:1.5px solid #8a8a8a;border-left:1.5px solid #9a9a9a;"></div>
<span class="t" style="top:628.7px;font:normal 8.75px/20px 'DejaVu Sans',sans-serif;color:#111;left:1493px;letter-spacing:-0.070px;">10</span>
<svg width="14" height="14" style="left:1540.5px;top:631.5px" viewBox="0 0 14 14"><path d="M8 8 L12.6 12.6" stroke="#b9a06a" stroke-width="2.2" stroke-linecap="round"/><circle cx="5.4" cy="5.4" r="4.3" fill="#d6e8fa" stroke="#8fb4e0" stroke-width="1.3"/><path d="M3 4.6 Q3.8 2.8 5.8 2.8" stroke="#fff" stroke-width="1.1" fill="none"/></svg>
<span class="t" style="top:649.7px;font:normal 9.75px/20px 'DejaVu Sans',sans-serif;color:#111;left:457.5px;letter-spacing:0.014px;">Date of Birth</span>
<div class="t" style="top:649.7px;font:normal 9.5px/20px 'DejaVu Sans',sans-serif;color:#111;left:1093.7px;width:600px;text-align:center;letter-spacing:0.070px;"><span>Date</span></div>
<i class="cb on" style="left:1417.2px;top:654.3px"></i>
<i class="cb on" style="left:1443.2px;top:654.3px"></i>
<i class="cb" style="left:1469.2px;top:654.3px"></i>
<div style="left:1491px;top:651px;width:33px;height:16px;background:#f6f6f6;border:1px solid #d9d9d9;border-top:1.5px solid #8a8a8a;border-left:1.5px solid #9a9a9a;"></div>
<span class="t" style="top:649.7px;font:normal 8.75px/20px 'DejaVu Sans',sans-serif;color:#111;left:1493px;letter-spacing:-0.070px;">20</span>
<svg width="14" height="14" style="left:1540.5px;top:652.5px" viewBox="0 0 14 14"><path d="M8 8 L12.6 12.6" stroke="#b9a06a" stroke-width="2.2" stroke-linecap="round"/><circle cx="5.4" cy="5.4" r="4.3" fill="#d6e8fa" stroke="#8fb4e0" stroke-width="1.3"/><path d="M3 4.6 Q3.8 2.8 5.8 2.8" stroke="#fff" stroke-width="1.1" fill="none"/></svg>
<span class="t" style="top:670.7px;font:normal 9.75px/20px 'DejaVu Sans',sans-serif;color:#111;left:457.5px;letter-spacing:0.009px;">E-mail of Record</span>
<div class="t" style="top:669.7px;font:normal 10.5px/20px 'DejaVu Sans',sans-serif;color:#111;left:1093.7px;width:600px;text-align:center;letter-spacing:0.013px;"><span>Text</span></div>
<i class="cb on" style="left:1417.2px;top:675.3px"></i>
<i class="cb on" style="left:1443.2px;top:675.3px"></i>
<i class="cb" style="left:1469.2px;top:675.3px"></i>
<div style="left:1491px;top:672px;width:33px;height:16px;background:#f6f6f6;border:1px solid #d9d9d9;border-top:1.5px solid #8a8a8a;border-left:1.5px solid #9a9a9a;"></div>
<span class="t" style="top:670.7px;font:normal 8.75px/20px 'DejaVu Sans',sans-serif;color:#111;left:1493px;letter-spacing:-0.070px;">30</span>
<svg width="14" height="14" style="left:1540.5px;top:673.5px" viewBox="0 0 14 14"><path d="M8 8 L12.6 12.6" stroke="#b9a06a" stroke-width="2.2" stroke-linecap="round"/><circle cx="5.4" cy="5.4" r="4.3" fill="#d6e8fa" stroke="#8fb4e0" stroke-width="1.3"/><path d="M3 4.6 Q3.8 2.8 5.8 2.8" stroke="#fff" stroke-width="1.1" fill="none"/></svg>
<span class="t" style="top:691.7px;font:normal 10.0px/20px 'DejaVu Sans',sans-serif;color:#111;left:457.5px;letter-spacing:-0.075px;">US IMPORTER NUMBER</span>
<div class="t" style="top:690.7px;font:normal 10.5px/20px 'DejaVu Sans',sans-serif;color:#111;left:1093.7px;width:600px;text-align:center;letter-spacing:0.013px;"><span>Text</span></div>
<i class="cb on" style="left:1417.2px;top:696.3px"></i>
<i class="cb on" style="left:1443.2px;top:696.3px"></i>
<i class="cb" style="left:1469.2px;top:696.3px"></i>
<div style="left:1491px;top:693px;width:33px;height:16px;background:#f6f6f6;border:1px solid #d9d9d9;border-top:1.5px solid #8a8a8a;border-left:1.5px solid #9a9a9a;"></div>
<span class="t" style="top:691.7px;font:normal 8.75px/20px 'DejaVu Sans',sans-serif;color:#111;left:1493px;letter-spacing:-0.070px;">40</span>
<svg width="14" height="14" style="left:1540.5px;top:694.5px" viewBox="0 0 14 14"><path d="M8 8 L12.6 12.6" stroke="#b9a06a" stroke-width="2.2" stroke-linecap="round"/><circle cx="5.4" cy="5.4" r="4.3" fill="#d6e8fa" stroke="#8fb4e0" stroke-width="1.3"/><path d="M3 4.6 Q3.8 2.8 5.8 2.8" stroke="#fff" stroke-width="1.1" fill="none"/></svg>
<span class="t" style="top:712.7px;font:normal 10.0px/20px 'DejaVu Sans',sans-serif;color:#111;left:457.5px;letter-spacing:0.064px;">FOREIGN ADDRESS OF RECORD</span>
<div class="t" style="top:711.7px;font:normal 10.25px/20px 'DejaVu Sans',sans-serif;color:#111;left:1093.7px;width:600px;text-align:center;letter-spacing:-0.015px;"><span>Set</span></div>
<i class="cb" style="left:1417.2px;top:717.3px"></i>
<i class="cb" style="left:1443.2px;top:717.3px"></i>
<i class="cb" style="left:1469.2px;top:717.3px"></i>
<div style="left:1491px;top:714px;width:33px;height:16px;background:#f6f6f6;border:1px solid #d9d9d9;border-top:1.5px solid #8a8a8a;border-left:1.5px solid #9a9a9a;"></div>
<svg width="14" height="14" style="left:1540.5px;top:715.5px" viewBox="0 0 14 14"><path d="M8 8 L12.6 12.6" stroke="#b9a06a" stroke-width="2.2" stroke-linecap="round"/><circle cx="5.4" cy="5.4" r="4.3" fill="#d6e8fa" stroke="#8fb4e0" stroke-width="1.3"/><path d="M3 4.6 Q3.8 2.8 5.8 2.8" stroke="#fff" stroke-width="1.1" fill="none"/></svg>
<span class="t" style="top:733.7px;font:normal 10.0px/20px 'DejaVu Sans',sans-serif;color:#111;left:457.5px;letter-spacing:-0.017px;">FOREIGN FAX NUMBER OF RECORD</span>
<div class="t" style="top:732.7px;font:normal 10.25px/20px 'DejaVu Sans',sans-serif;color:#111;left:1093.7px;width:600px;text-align:center;letter-spacing:-0.015px;"><span>Set</span></div>
<i class="cb" style="left:1417.2px;top:738.3px"></i>
<i class="cb" style="left:1443.2px;top:738.3px"></i>
<i class="cb" style="left:1469.2px;top:738.3px"></i>
<div style="left:1491px;top:735px;width:33px;height:16px;background:#f6f6f6;border:1px solid #d9d9d9;border-top:1.5px solid #8a8a8a;border-left:1.5px solid #9a9a9a;"></div>
<svg width="14" height="14" style="left:1540.5px;top:736.5px" viewBox="0 0 14 14"><path d="M8 8 L12.6 12.6" stroke="#b9a06a" stroke-width="2.2" stroke-linecap="round"/><circle cx="5.4" cy="5.4" r="4.3" fill="#d6e8fa" stroke="#8fb4e0" stroke-width="1.3"/><path d="M3 4.6 Q3.8 2.8 5.8 2.8" stroke="#fff" stroke-width="1.1" fill="none"/></svg>
<span class="t" style="top:754.7px;font:normal 9.75px/20px 'DejaVu Sans',sans-serif;color:#111;left:457.5px;letter-spacing:0.062px;">FOREIGN PHONE NUMBER OF RECORD</span>
<div class="t" style="top:753.7px;font:normal 10.25px/20px 'DejaVu Sans',sans-serif;color:#111;left:1093.7px;width:600px;text-align:center;letter-spacing:-0.015px;"><span>Set</span></div>
<i class="cb" style="left:1417.2px;top:759.3px"></i>
<i class="cb" style="left:1443.2px;top:759.3px"></i>
<i class="cb" style="left:1469.2px;top:759.3px"></i>
<div style="left:1491px;top:756px;width:33px;height:16px;background:#f6f6f6;border:1px solid #d9d9d9;border-top:1.5px solid #8a8a8a;border-left:1.5px solid #9a9a9a;"></div>
<svg width="14" height="14" style="left:1540.5px;top:757.5px" viewBox="0 0 14 14"><path d="M8 8 L12.6 12.6" stroke="#b9a06a" stroke-width="2.2" stroke-linecap="round"/><circle cx="5.4" cy="5.4" r="4.3" fill="#d6e8fa" stroke="#8fb4e0" stroke-width="1.3"/><path d="M3 4.6 Q3.8 2.8 5.8 2.8" stroke="#fff" stroke-width="1.1" fill="none"/></svg>
<span class="t" style="top:775.7px;font:normal 9.75px/20px 'DejaVu Sans',sans-serif;color:#111;left:457.5px;letter-spacing:0.016px;">Relationship to Vessel owner or Managing Owner</span>
<div class="t" style="top:774.7px;font:normal 10.5px/20px 'DejaVu Sans',sans-serif;color:#111;left:1093.7px;width:600px;text-align:center;letter-spacing:0.013px;"><span>Text</span></div>
<i class="cb" style="left:1417.2px;top:780.3px"></i>
<i class="cb" style="left:1443.2px;top:780.3px"></i>
<i class="cb" style="left:1469.2px;top:780.3px"></i>
<div style="left:1491px;top:777px;width:33px;height:16px;background:#f6f6f6;border:1px solid #d9d9d9;border-top:1.5px solid #8a8a8a;border-left:1.5px solid #9a9a9a;"></div>
<svg width="14" height="14" style="left:1540.5px;top:778.5px" viewBox="0 0 14 14"><path d="M8 8 L12.6 12.6" stroke="#b9a06a" stroke-width="2.2" stroke-linecap="round"/><circle cx="5.4" cy="5.4" r="4.3" fill="#d6e8fa" stroke="#8fb4e0" stroke-width="1.3"/><path d="M3 4.6 Q3.8 2.8 5.8 2.8" stroke="#fff" stroke-width="1.1" fill="none"/></svg>
<div style="left:810px;top:833px;width:81px;height:18.5px;background:linear-gradient(180deg,#ffffff 0,#f4f4f4 50%,#dcdcdc 100%);border:1px solid #4a4a4a;border-radius:3.5px;"></div>
<span class="t" style="top:833.3px;font:bold 9.75px/20px 'DejaVu Sans',sans-serif;color:#14146a;left:838.2px;letter-spacing:-0.070px;">Save</span>
<div style="left:902px;top:833px;width:81px;height:18.5px;background:linear-gradient(180deg,#ffffff 0,#f4f4f4 50%,#dcdcdc 100%);border:1px solid #4a4a4a;border-radius:3.5px;"></div>
<span class="t" style="top:833.3px;font:normal 9.5px/20px 'DejaVu Sans',sans-serif;color:#14146a;left:927px;letter-spacing:0.052px;">Cancel</span>
<div style="left:0px;top:1113px;width:1600px;height:11px;background:#fbd03f;"></div>
<div style="left:0px;top:1124px;width:1600px;height:1px;background:#fff6d8;"></div>
<div style="left:0px;top:1125px;width:1600px;height:6px;background:#1b7acb;"></div>
<div style="left:0px;top:1131px;width:1600px;height:69px;background:#fff;"></div>
<span class="t" style="top:1128px;font:normal 9.0px/20px 'Liberation Sans',sans-serif;color:#e8401c;left:737.5px;letter-spacing:0.054px;text-decoration:underline;">U.S. Department of Commerce</span>
<span class="t" style="top:1138px;font:normal 9.25px/20px 'Liberation Sans',sans-serif;color:#e8401c;left:698.5px;letter-spacing:0.009px;text-decoration:underline;">National Oceanic and Atmospheric Administration</span>
<span class="t" style="top:1148px;font:normal 9.25px/20px 'Liberation Sans',sans-serif;color:#e8401c;left:767.5px;letter-spacing:-0.058px;text-decoration:underline;">NOAA Fisheries</span>
<span class="t" style="top:1158px;font:normal 9.5px/20px 'Liberation Sans',sans-serif;color:#e8401c;left:701px;letter-spacing:-0.045px;text-decoration:underline;">Privacy Policy</span>
<span class="t" style="top:1158px;font:normal 10px/20px 'Liberation Sans',sans-serif;color:#444;left:762.5px;">|</span>
<span class="t" style="top:1158px;font:normal 9.0px/20px 'Liberation Sans',sans-serif;color:#e8401c;left:768px;text-decoration:underline;">Disclaimer</span>
<span class="t" style="top:1158px;font:normal 10px/20px 'Liberation Sans',sans-serif;color:#444;left:813px;">|</span>
<span class="t" style="top:1158px;font:normal 9.25px/20px 'Liberation Sans',sans-serif;color:#e8401c;left:818px;letter-spacing:-0.034px;text-decoration:underline;">Contact Webmaster</span>
<svg width="36" height="36" style="left:480px;top:1133.8px" viewBox="0 0 36 36"><circle cx="18" cy="18" r="15.7" fill="#fff" stroke="#1583d2" stroke-width="3.3"/><circle cx="18" cy="18" r="15.7" fill="none" stroke="#a6ecf6" stroke-width="1" stroke-dasharray="1.3 1"/><path d="M10.8 15.3 H25.2 V24 Q25 28 18 30.2 Q11 28 10.8 24Z" fill="#f8c81c" stroke="#2a5fa8" stroke-width=".8"/><path d="M10.8 15.3 H25.2 V22.2 H10.8Z" fill="#1a78d0" stroke="#2a5fa8" stroke-width=".8"/><path d="M13 20.6 L15.4 17.4 L20.4 16.8 L22.6 20.2 L19 21.2Z" fill="#f0e4ea"/><path d="M12.4 21.4 H23.6" stroke="#0a2a5a" stroke-width="1"/><path d="M18 22.4 V30" stroke="#8a6a2a" stroke-width="1.1"/><path d="M14.6 24 Q15.6 23.2 16.4 24 M19.6 24 Q20.6 23.2 21.4 24" stroke="#fde98a" stroke-width="1" fill="none"/><path d="M18 14.4 L14.3 7.8 M18 14.4 L21.7 7.8" stroke="#6a451a" stroke-width="1.7" stroke-linecap="round"/><path d="M16.6 14.8 L18 11.4 L19.4 14.8Z" fill="#b8902f"/></svg>
<svg width="37.2" height="37.2" style="left:1083.4px;top:1133.9px" viewBox="0 0 37.2 37.2"><defs><clipPath id="cpf"><circle cx="0" cy="0" r="15.7"/></clipPath></defs><g transform="translate(18.6 18.6) scale(1.0000 1.0000)"><circle cx="0" cy="0" r="16.9" fill="none" stroke="#5b609c" stroke-width="0.9" stroke-dasharray="1.3 .7"/><g clip-path="url(#cpf)"><circle cx="0" cy="0" r="15.7" fill="#0b9cfb"/><path d="M-16.5 -5.4 C-11 -4.6 -7 2 -1.6 5.6 L-5.4 6.9 L-4.8 7.6 C-1.5 7.2 1.5 5.6 4 2.6 C8 -2 11 -6.4 16.5 -9.4 L16.5 -20 L-16.5 -20Z" fill="#fff"/><path d="M-12.4 -9.4 L-8 -16 L8 -16 L12.2 -10.6 C9 -7.4 6 -0.6 1.8 2.2 C0.6 3 -1.6 3 -2.8 2 C-6 -1 -8.4 -6.4 -12.4 -9.4Z" fill="#07076e"/></g></g></svg>
<span class="t" style="top:1129px;font:normal 4px/20px 'Liberation Sans',sans-serif;color:#333;left:1115.5px;">®</span>
<div class="t" style="top:1135.3px;font:bold 5.5px/20px 'Liberation Sans',sans-serif;color:#fff;left:801.8px;width:600px;text-align:center;letter-spacing:-0.100px;"><span>noaa</span></div>
</div></body></html>
